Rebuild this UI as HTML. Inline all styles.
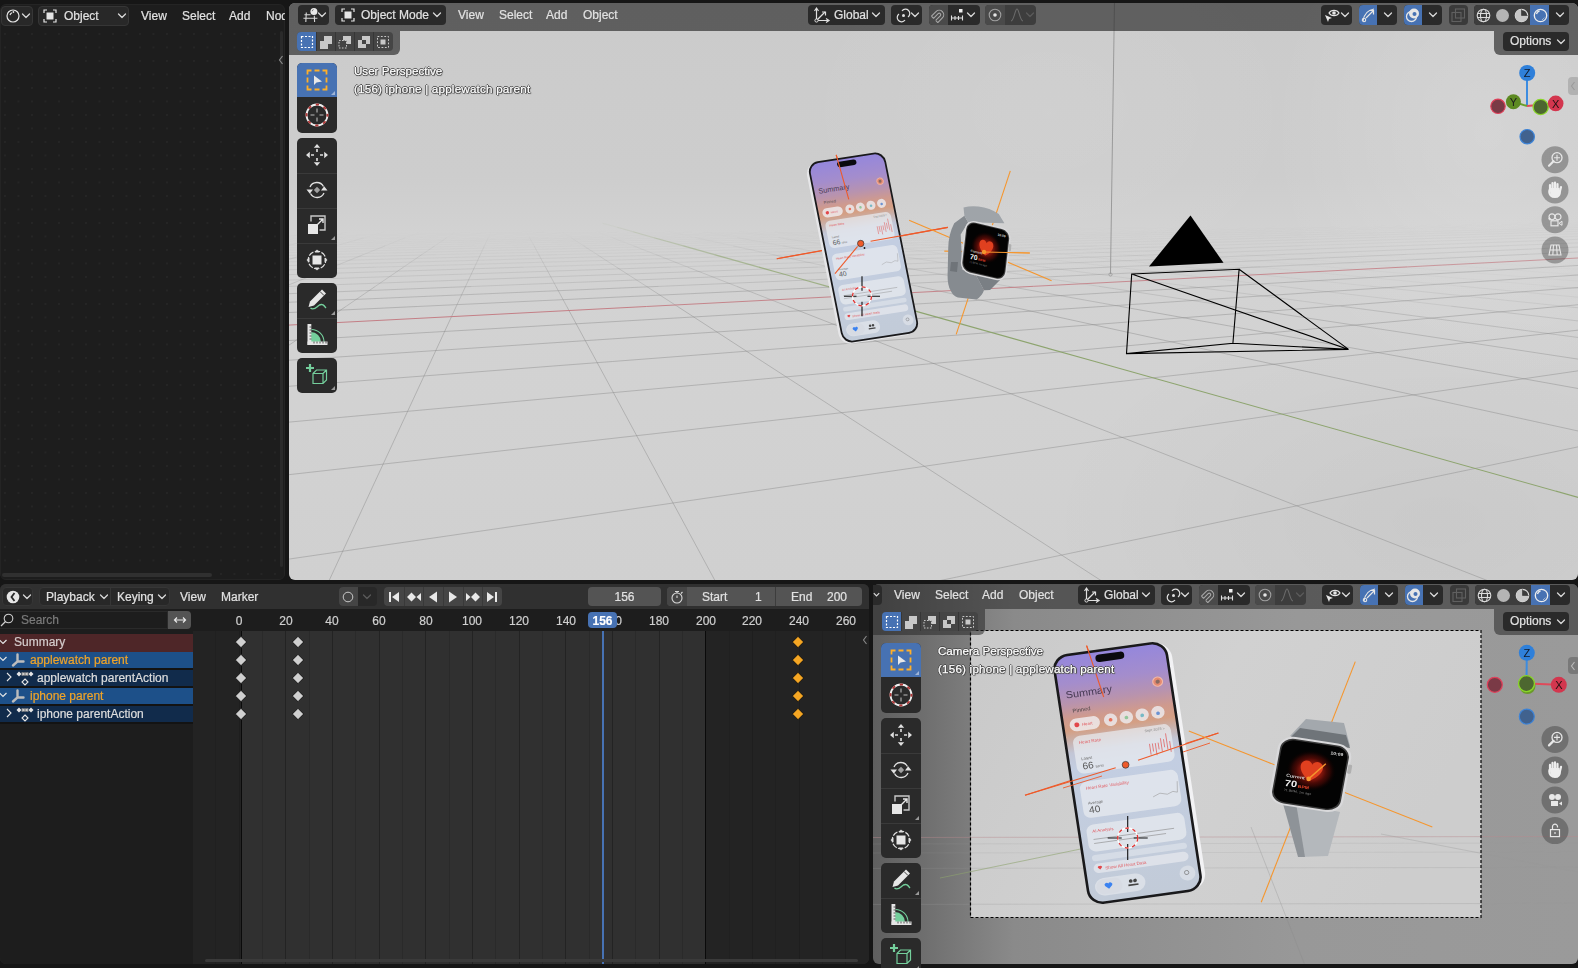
<!DOCTYPE html><html><head><meta charset="utf-8"><style>
*{box-sizing:border-box;margin:0;padding:0}
html,body{width:1578px;height:968px;overflow:hidden;background:#161616;font-family:"Liberation Sans",sans-serif;font-size:12px;color:#e2e2e2}
.a{position:absolute}
.t{position:absolute;white-space:nowrap;line-height:14px;will-change:transform;-webkit-text-stroke:0.2px currentColor}
.ov{color:#fff;-webkit-text-stroke:0.25px #fff;text-shadow:1px 0 0 #4a4a4a,-1px 0 0 #4a4a4a,0 1px 0 #4a4a4a,0 -1px 0 #4a4a4a,1px 1px 1px #555}
.btn{position:absolute;background:#2a2a2a;border-radius:4px}
svg.a{overflow:visible}
</style></head><body>
<div class="a" style="left:0;top:4px;width:285px;height:576px;background:#1d1d1d;border-radius:6px;overflow:hidden;border:1px solid #242424"><div class="a" style="left:3px;top:28px;width:290px;height:560px;background-image:radial-gradient(circle at 1px 1px,#252525 0.8px,transparent 1px);background-size:13.5px 13.5px;background-position:0 0"></div></div>
<div class="a" style="left:1px;top:6px;width:32px;height:20px;background:#282828;border-radius:4px;border:1px solid #363636"></div>
<svg class="a" style="left:6.0px;top:9.0px" width="14" height="14" viewBox="0 0 14 14" ><circle cx="7" cy="7" r="6" fill="none" stroke="#e6e6e6" stroke-width="1.2"/><path d="M4 6 A3.5 3.5 0 0 1 6 3.8" stroke="#e6e6e6" stroke-width="1.2" fill="none"/><circle cx="7.4" cy="3" r="0.9" fill="#e6e6e6"/></svg>
<svg class="a" style="left:21.0px;top:12.0px" width="10" height="8" viewBox="0 0 10 8" ><path d="M1.5 2 L5 5.5 L8.5 2" fill="none" stroke="#d8d8d8" stroke-width="1.3" stroke-linecap="round" stroke-linejoin="round"/></svg>
<div class="a" style="left:38px;top:6px;width:91px;height:20px;background:#282828;border-radius:4px;border:1px solid #363636"></div>
<svg class="a" style="left:43.0px;top:9.0px" width="14" height="14" viewBox="0 0 14 14" ><path d="M1 4V1h3M10 1h3v3M13 10v3h-3M4 13H1v-3" fill="none" stroke="#e6e6e6" stroke-width="1.2"/><rect x="3.5" y="3.5" width="7" height="7" fill="#e6e6e6"/></svg>
<div class="t" style="left:64px;top:9px;">Object</div>
<svg class="a" style="left:117.0px;top:12.0px" width="10" height="8" viewBox="0 0 10 8" ><path d="M1.5 2 L5 5.5 L8.5 2" fill="none" stroke="#d8d8d8" stroke-width="1.3" stroke-linecap="round" stroke-linejoin="round"/></svg>
<div class="t" style="left:141px;top:9px;">View</div>
<div class="t" style="left:182px;top:9px;">Select</div>
<div class="t" style="left:229px;top:9px;">Add</div>
<div class="t" style="left:266px;top:9px;">Node</div>
<div class="a" style="left:2px;top:573px;width:210px;height:4px;background:#303030;border-radius:2px;"></div>
<div class="a" style="left:280px;top:31px;width:3px;height:536px;background:#2a2a2a;border-radius:2px;"></div>
<svg class="a" style="left:278.0px;top:55.0px" width="6" height="10" viewBox="0 0 6 10" ><path d="M4.5 1 L1.5 5 L4.5 9" fill="none" stroke="#8a8a8a" stroke-width="1.2"/></svg>
<div class="a" style="left:285px;top:0px;width:4px;height:580px;background:#161616;border-radius:0px;"></div>
<div id="vp" class="a" style="left:289px;top:3px;width:1289px;height:577px;border-radius:6px;overflow:hidden;background:linear-gradient(180deg,#cbcbcb 0%,#cdcdcd 30%,#d3d3d3 42%,#d2d2d2 70%,#d0d0d0 100%)">
<div class="a" style="left:0;top:0;width:1289px;height:577px;background:radial-gradient(ellipse 220px 260px at 1200px 130px,rgba(255,255,255,0.16),rgba(255,255,255,0) 100%),radial-gradient(ellipse 260px 200px at 760px 110px,rgba(255,255,255,0.07),rgba(255,255,255,0) 100%),radial-gradient(ellipse 400px 220px at 1150px 520px,rgba(0,0,0,0.035),rgba(0,0,0,0) 100%)"></div>
<svg class="a" style="left:-289px;top:-3px" width="1578" height="968"><g stroke="#8a8a8a" stroke-width="1"><line x1="1252.8" y1="2673.0" x2="2573.9" y2="526.0" stroke-opacity="0.45"/><line x1="-3904.8" y1="2674.8" x2="1886.2" y2="526.2" stroke-opacity="0.45"/><line x1="-9062.5" y1="2676.6" x2="1198.5" y2="526.4" stroke-opacity="0.45"/><line x1="1198.5" y1="526.4" x2="1987.8" y2="361.0" stroke-opacity="0.45"/><line x1="-14220.2" y1="2678.4" x2="510.8" y2="526.7" stroke-opacity="0.45"/><line x1="510.8" y1="526.7" x2="1644.0" y2="361.2" stroke-opacity="0.45"/><line x1="-176.9" y1="526.9" x2="1300.1" y2="361.3" stroke-opacity="0.45"/><line x1="1300.1" y1="361.3" x2="1792.5" y2="306.1" stroke-opacity="0.45"/><line x1="-864.6" y1="527.1" x2="956.3" y2="361.4" stroke-opacity="0.45"/><line x1="956.3" y1="361.4" x2="1563.2" y2="306.1" stroke-opacity="0.45"/><line x1="1563.2" y1="306.1" x2="1783.9" y2="286.0" stroke-opacity="0.42"/><line x1="-1552.3" y1="527.4" x2="612.4" y2="361.5" stroke-opacity="0.45"/><line x1="612.4" y1="361.5" x2="1334.0" y2="306.2" stroke-opacity="0.45"/><line x1="1334.0" y1="306.2" x2="1596.4" y2="286.1" stroke-opacity="0.42"/><line x1="268.6" y1="361.6" x2="1104.8" y2="306.3" stroke-opacity="0.45"/><line x1="1104.8" y1="306.3" x2="1408.8" y2="286.2" stroke-opacity="0.42"/><line x1="1408.8" y1="286.2" x2="1702.0" y2="266.8" stroke-opacity="0.38"/><line x1="-75.3" y1="361.7" x2="875.5" y2="306.4" stroke-opacity="0.45"/><line x1="875.5" y1="306.4" x2="1221.3" y2="286.2" stroke-opacity="0.42"/><line x1="1221.3" y1="286.2" x2="1554.7" y2="266.8" stroke-opacity="0.38"/><line x1="1554.7" y1="266.8" x2="1770.4" y2="254.3" stroke-opacity="0.33"/><line x1="-762.9" y1="362.0" x2="417.1" y2="306.5" stroke-opacity="0.45"/><line x1="417.1" y1="306.5" x2="846.2" y2="286.4" stroke-opacity="0.42"/><line x1="846.2" y1="286.4" x2="1260.0" y2="266.9" stroke-opacity="0.32"/><line x1="1260.0" y1="266.9" x2="1527.7" y2="254.3" stroke-opacity="0.24"/><line x1="1527.7" y1="254.3" x2="1715.1" y2="245.5" stroke-opacity="0.19"/><line x1="187.9" y1="306.6" x2="658.6" y2="286.4" stroke-opacity="0.38"/><line x1="658.6" y1="286.4" x2="1112.6" y2="267.0" stroke-opacity="0.28"/><line x1="1112.6" y1="267.0" x2="1406.3" y2="254.4" stroke-opacity="0.21"/><line x1="1406.3" y1="254.4" x2="1612.0" y2="245.6" stroke-opacity="0.16"/><line x1="-41.4" y1="306.7" x2="471.1" y2="286.5" stroke-opacity="0.34"/><line x1="471.1" y1="286.5" x2="965.2" y2="267.0" stroke-opacity="0.25"/><line x1="965.2" y1="267.0" x2="1285.0" y2="254.4" stroke-opacity="0.18"/><line x1="1285.0" y1="254.4" x2="1508.8" y2="245.6" stroke-opacity="0.14"/><line x1="1508.8" y1="245.6" x2="1720.2" y2="237.3" stroke-opacity="0.11"/><line x1="-270.6" y1="306.8" x2="283.5" y2="286.6" stroke-opacity="0.30"/><line x1="283.5" y1="286.6" x2="817.9" y2="267.1" stroke-opacity="0.22"/><line x1="817.9" y1="267.1" x2="1163.6" y2="254.5" stroke-opacity="0.16"/><line x1="1163.6" y1="254.5" x2="1405.6" y2="245.6" stroke-opacity="0.12"/><line x1="1405.6" y1="245.6" x2="1634.2" y2="237.3" stroke-opacity="0.09"/><line x1="96.0" y1="286.6" x2="670.5" y2="267.1" stroke-opacity="0.20"/><line x1="670.5" y1="267.1" x2="1042.3" y2="254.5" stroke-opacity="0.14"/><line x1="1042.3" y1="254.5" x2="1302.5" y2="245.7" stroke-opacity="0.11"/><line x1="1302.5" y1="245.7" x2="1548.3" y2="237.3" stroke-opacity="0.08"/><line x1="1548.3" y1="237.3" x2="1723.8" y2="231.4" stroke-opacity="0.06"/><line x1="-91.6" y1="286.7" x2="523.1" y2="267.2" stroke-opacity="0.18"/><line x1="523.1" y1="267.2" x2="920.9" y2="254.6" stroke-opacity="0.13"/><line x1="920.9" y1="254.6" x2="1199.3" y2="245.7" stroke-opacity="0.10"/><line x1="1199.3" y1="245.7" x2="1462.3" y2="237.4" stroke-opacity="0.07"/><line x1="1462.3" y1="237.4" x2="1650.1" y2="231.4" stroke-opacity="0.05"/><line x1="-279.1" y1="286.8" x2="375.8" y2="267.2" stroke-opacity="0.16"/><line x1="375.8" y1="267.2" x2="799.6" y2="254.6" stroke-opacity="0.12"/><line x1="799.6" y1="254.6" x2="1096.2" y2="245.8" stroke-opacity="0.09"/><line x1="1096.2" y1="245.8" x2="1376.3" y2="237.4" stroke-opacity="0.07"/><line x1="1376.3" y1="237.4" x2="1576.5" y2="231.4" stroke-opacity="0.05"/><line x1="1576.5" y1="231.4" x2="1726.5" y2="227.0" stroke-opacity="0.04"/><line x1="228.4" y1="267.3" x2="678.2" y2="254.6" stroke-opacity="0.11"/><line x1="678.2" y1="254.6" x2="993.0" y2="245.8" stroke-opacity="0.08"/><line x1="993.0" y1="245.8" x2="1290.4" y2="237.4" stroke-opacity="0.06"/><line x1="1290.4" y1="237.4" x2="1502.8" y2="231.5" stroke-opacity="0.04"/><line x1="1502.8" y1="231.5" x2="1662.1" y2="227.0" stroke-opacity="0.03"/><line x1="81.1" y1="267.3" x2="556.8" y2="254.7" stroke-opacity="0.10"/><line x1="556.8" y1="254.7" x2="889.9" y2="245.8" stroke-opacity="0.07"/><line x1="889.9" y1="245.8" x2="1204.4" y2="237.5" stroke-opacity="0.05"/><line x1="1204.4" y1="237.5" x2="1429.1" y2="231.5" stroke-opacity="0.04"/><line x1="1429.1" y1="231.5" x2="1597.6" y2="227.0" stroke-opacity="0.03"/><line x1="-66.3" y1="267.4" x2="435.5" y2="254.7" stroke-opacity="0.09"/><line x1="435.5" y1="254.7" x2="786.7" y2="245.9" stroke-opacity="0.06"/><line x1="786.7" y1="245.9" x2="1118.5" y2="237.5" stroke-opacity="0.05"/><line x1="1118.5" y1="237.5" x2="1355.4" y2="231.5" stroke-opacity="0.03"/><line x1="1355.4" y1="231.5" x2="1533.1" y2="227.0" stroke-opacity="0.02"/><line x1="1533.1" y1="227.0" x2="1701.2" y2="222.8" stroke-opacity="0.02"/><line x1="-213.7" y1="267.4" x2="314.1" y2="254.8" stroke-opacity="0.08"/><line x1="314.1" y1="254.8" x2="683.6" y2="245.9" stroke-opacity="0.06"/><line x1="683.6" y1="245.9" x2="1032.5" y2="237.5" stroke-opacity="0.04"/><line x1="1032.5" y1="237.5" x2="1281.7" y2="231.5" stroke-opacity="0.03"/><line x1="1281.7" y1="231.5" x2="1468.7" y2="227.0" stroke-opacity="0.02"/><line x1="1468.7" y1="227.0" x2="1645.5" y2="222.8" stroke-opacity="0.01"/><line x1="192.8" y1="254.8" x2="580.4" y2="245.9" stroke-opacity="0.05"/><line x1="580.4" y1="245.9" x2="946.5" y2="237.5" stroke-opacity="0.04"/><line x1="946.5" y1="237.5" x2="1208.1" y2="231.6" stroke-opacity="0.03"/><line x1="1208.1" y1="231.6" x2="1404.2" y2="227.1" stroke-opacity="0.02"/><line x1="1404.2" y1="227.1" x2="1589.7" y2="222.8" stroke-opacity="0.01"/><line x1="71.4" y1="254.9" x2="477.3" y2="246.0" stroke-opacity="0.05"/><line x1="477.3" y1="246.0" x2="860.6" y2="237.6" stroke-opacity="0.03"/><line x1="860.6" y1="237.6" x2="1134.4" y2="231.6" stroke-opacity="0.02"/><line x1="1134.4" y1="231.6" x2="1339.7" y2="227.1" stroke-opacity="0.02"/><line x1="1339.7" y1="227.1" x2="1534.0" y2="222.8" stroke-opacity="0.01"/><line x1="-50.0" y1="254.9" x2="374.1" y2="246.0" stroke-opacity="0.04"/><line x1="374.1" y1="246.0" x2="774.6" y2="237.6" stroke-opacity="0.03"/><line x1="774.6" y1="237.6" x2="1060.7" y2="231.6" stroke-opacity="0.02"/><line x1="1060.7" y1="231.6" x2="1275.2" y2="227.1" stroke-opacity="0.01"/><line x1="271.0" y1="246.0" x2="688.7" y2="237.6" stroke-opacity="0.03"/><line x1="688.7" y1="237.6" x2="987.0" y2="231.6" stroke-opacity="0.02"/><line x1="987.0" y1="231.6" x2="1210.8" y2="227.1" stroke-opacity="0.01"/><line x1="167.8" y1="246.1" x2="602.7" y2="237.7" stroke-opacity="0.03"/><line x1="602.7" y1="237.7" x2="913.3" y2="231.7" stroke-opacity="0.02"/><line x1="913.3" y1="231.7" x2="1146.3" y2="227.2" stroke-opacity="0.01"/><line x1="64.7" y1="246.1" x2="516.7" y2="237.7" stroke-opacity="0.02"/><line x1="516.7" y1="237.7" x2="839.6" y2="231.7" stroke-opacity="0.02"/><line x1="839.6" y1="231.7" x2="1081.8" y2="227.2" stroke-opacity="0.01"/><line x1="-38.5" y1="246.1" x2="430.8" y2="237.7" stroke-opacity="0.02"/><line x1="430.8" y1="237.7" x2="766.0" y2="231.7" stroke-opacity="0.01"/><line x1="-141.7" y1="246.2" x2="344.8" y2="237.8" stroke-opacity="0.02"/><line x1="344.8" y1="237.8" x2="692.3" y2="231.7" stroke-opacity="0.01"/><line x1="258.8" y1="237.8" x2="618.6" y2="231.8" stroke-opacity="0.01"/><line x1="172.9" y1="237.8" x2="544.9" y2="231.8" stroke-opacity="0.01"/><line x1="235.5" y1="246.1" x2="280.8" y2="237.8" stroke-opacity="0.07"/><line x1="280.8" y1="237.8" x2="313.2" y2="231.9" stroke-opacity="0.02"/><line x1="246.1" y1="254.8" x2="285.3" y2="246.0" stroke-opacity="0.13"/><line x1="285.3" y1="246.0" x2="322.3" y2="237.8" stroke-opacity="0.07"/><line x1="322.3" y1="237.8" x2="348.7" y2="231.9" stroke-opacity="0.02"/><line x1="261.2" y1="267.3" x2="304.7" y2="254.8" stroke-opacity="0.20"/><line x1="304.7" y1="254.8" x2="335.1" y2="246.0" stroke-opacity="0.13"/><line x1="335.1" y1="246.0" x2="363.8" y2="237.8" stroke-opacity="0.07"/><line x1="363.8" y1="237.8" x2="384.3" y2="231.8" stroke-opacity="0.02"/><line x1="235.1" y1="306.6" x2="284.6" y2="286.6" stroke-opacity="0.37"/><line x1="284.6" y1="286.6" x2="332.3" y2="267.2" stroke-opacity="0.28"/><line x1="332.3" y1="267.2" x2="363.2" y2="254.7" stroke-opacity="0.20"/><line x1="363.2" y1="254.7" x2="384.8" y2="246.0" stroke-opacity="0.13"/><line x1="384.8" y1="246.0" x2="405.2" y2="237.7" stroke-opacity="0.07"/><line x1="405.2" y1="237.7" x2="419.8" y2="231.8" stroke-opacity="0.02"/><line x1="264.8" y1="361.6" x2="345.7" y2="306.6" stroke-opacity="0.45"/><line x1="345.7" y1="306.6" x2="375.1" y2="286.5" stroke-opacity="0.37"/><line x1="375.1" y1="286.5" x2="403.4" y2="267.2" stroke-opacity="0.28"/><line x1="403.4" y1="267.2" x2="421.7" y2="254.7" stroke-opacity="0.20"/><line x1="421.7" y1="254.7" x2="434.6" y2="246.0" stroke-opacity="0.13"/><line x1="434.6" y1="246.0" x2="446.7" y2="237.7" stroke-opacity="0.07"/><line x1="446.7" y1="237.7" x2="455.4" y2="231.8" stroke-opacity="0.02"/><line x1="-641.8" y1="2673.7" x2="354.1" y2="526.7" stroke-opacity="0.45"/><line x1="354.1" y1="526.7" x2="430.7" y2="361.6" stroke-opacity="0.45"/><line x1="430.7" y1="361.6" x2="456.2" y2="306.5" stroke-opacity="0.45"/><line x1="456.2" y1="306.5" x2="465.5" y2="286.5" stroke-opacity="0.37"/><line x1="465.5" y1="286.5" x2="474.5" y2="267.2" stroke-opacity="0.28"/><line x1="474.5" y1="267.2" x2="480.3" y2="254.7" stroke-opacity="0.20"/><line x1="480.3" y1="254.7" x2="484.3" y2="246.0" stroke-opacity="0.13"/><line x1="484.3" y1="246.0" x2="488.2" y2="237.7" stroke-opacity="0.07"/><line x1="488.2" y1="237.7" x2="490.9" y2="231.8" stroke-opacity="0.02"/><line x1="1846.0" y1="2672.8" x2="685.8" y2="526.6" stroke-opacity="0.45"/><line x1="685.8" y1="526.6" x2="596.6" y2="361.5" stroke-opacity="0.45"/><line x1="596.6" y1="361.5" x2="566.8" y2="306.5" stroke-opacity="0.45"/><line x1="566.8" y1="306.5" x2="556.0" y2="286.5" stroke-opacity="0.37"/><line x1="556.0" y1="286.5" x2="545.6" y2="267.2" stroke-opacity="0.28"/><line x1="545.6" y1="267.2" x2="538.8" y2="254.7" stroke-opacity="0.20"/><line x1="538.8" y1="254.7" x2="534.1" y2="245.9" stroke-opacity="0.13"/><line x1="534.1" y1="245.9" x2="529.6" y2="237.7" stroke-opacity="0.07"/><line x1="529.6" y1="237.7" x2="526.4" y2="231.8" stroke-opacity="0.02"/><line x1="4333.8" y1="2672.0" x2="1017.5" y2="526.5" stroke-opacity="0.45"/><line x1="1017.5" y1="526.5" x2="762.4" y2="361.5" stroke-opacity="0.45"/><line x1="762.4" y1="361.5" x2="677.4" y2="306.4" stroke-opacity="0.45"/><line x1="677.4" y1="306.4" x2="646.5" y2="286.4" stroke-opacity="0.37"/><line x1="646.5" y1="286.4" x2="616.6" y2="267.2" stroke-opacity="0.28"/><line x1="616.6" y1="267.2" x2="597.3" y2="254.7" stroke-opacity="0.20"/><line x1="597.3" y1="254.7" x2="583.8" y2="245.9" stroke-opacity="0.13"/><line x1="583.8" y1="245.9" x2="571.1" y2="237.7" stroke-opacity="0.07"/><line x1="571.1" y1="237.7" x2="562.0" y2="231.8" stroke-opacity="0.02"/><line x1="6821.6" y1="2671.1" x2="1349.2" y2="526.4" stroke-opacity="0.45"/><line x1="1349.2" y1="526.4" x2="928.3" y2="361.4" stroke-opacity="0.45"/><line x1="928.3" y1="361.4" x2="787.9" y2="306.4" stroke-opacity="0.45"/><line x1="787.9" y1="306.4" x2="736.9" y2="286.4" stroke-opacity="0.37"/><line x1="736.9" y1="286.4" x2="687.7" y2="267.1" stroke-opacity="0.28"/><line x1="687.7" y1="267.1" x2="655.9" y2="254.6" stroke-opacity="0.20"/><line x1="655.9" y1="254.6" x2="633.6" y2="245.9" stroke-opacity="0.13"/><line x1="633.6" y1="245.9" x2="612.5" y2="237.7" stroke-opacity="0.07"/><line x1="612.5" y1="237.7" x2="597.5" y2="231.8" stroke-opacity="0.02"/><line x1="2012.6" y1="526.2" x2="1260.0" y2="361.3" stroke-opacity="0.45"/><line x1="1260.0" y1="361.3" x2="1009.1" y2="306.3" stroke-opacity="0.45"/><line x1="1009.1" y1="306.3" x2="917.9" y2="286.3" stroke-opacity="0.37"/><line x1="917.9" y1="286.3" x2="829.9" y2="267.1" stroke-opacity="0.28"/><line x1="829.9" y1="267.1" x2="773.0" y2="254.6" stroke-opacity="0.20"/><line x1="773.0" y1="254.6" x2="733.1" y2="245.9" stroke-opacity="0.13"/><line x1="733.1" y1="245.9" x2="695.5" y2="237.6" stroke-opacity="0.07"/><line x1="695.5" y1="237.6" x2="668.6" y2="231.7" stroke-opacity="0.02"/><line x1="2344.3" y1="526.0" x2="1425.8" y2="361.2" stroke-opacity="0.45"/><line x1="1425.8" y1="361.2" x2="1119.7" y2="306.3" stroke-opacity="0.45"/><line x1="1119.7" y1="306.3" x2="1008.3" y2="286.3" stroke-opacity="0.35"/><line x1="1008.3" y1="286.3" x2="901.0" y2="267.1" stroke-opacity="0.24"/><line x1="901.0" y1="267.1" x2="831.5" y2="254.6" stroke-opacity="0.17"/><line x1="831.5" y1="254.6" x2="782.9" y2="245.9" stroke-opacity="0.12"/><line x1="782.9" y1="245.9" x2="736.9" y2="237.6" stroke-opacity="0.07"/><line x1="736.9" y1="237.6" x2="704.1" y2="231.7" stroke-opacity="0.02"/><line x1="1591.7" y1="361.2" x2="1230.2" y2="306.3" stroke-opacity="0.41"/><line x1="1230.2" y1="306.3" x2="1098.8" y2="286.3" stroke-opacity="0.27"/><line x1="1098.8" y1="286.3" x2="972.0" y2="267.0" stroke-opacity="0.18"/><line x1="972.0" y1="267.0" x2="890.0" y2="254.6" stroke-opacity="0.13"/><line x1="890.0" y1="254.6" x2="832.6" y2="245.8" stroke-opacity="0.09"/><line x1="832.6" y1="245.8" x2="778.4" y2="237.6" stroke-opacity="0.06"/><line x1="778.4" y1="237.6" x2="739.7" y2="231.7" stroke-opacity="0.02"/><line x1="1757.5" y1="361.1" x2="1340.8" y2="306.2" stroke-opacity="0.33"/><line x1="1340.8" y1="306.2" x2="1189.3" y2="286.3" stroke-opacity="0.21"/><line x1="1189.3" y1="286.3" x2="1043.1" y2="267.0" stroke-opacity="0.14"/><line x1="1043.1" y1="267.0" x2="948.6" y2="254.5" stroke-opacity="0.10"/><line x1="948.6" y1="254.5" x2="882.4" y2="245.8" stroke-opacity="0.07"/><line x1="882.4" y1="245.8" x2="819.9" y2="237.6" stroke-opacity="0.04"/><line x1="819.9" y1="237.6" x2="775.2" y2="231.7" stroke-opacity="0.02"/><line x1="1923.4" y1="361.1" x2="1451.4" y2="306.2" stroke-opacity="0.27"/><line x1="1451.4" y1="306.2" x2="1279.7" y2="286.2" stroke-opacity="0.17"/><line x1="1279.7" y1="286.2" x2="1114.2" y2="267.0" stroke-opacity="0.11"/><line x1="1114.2" y1="267.0" x2="1007.1" y2="254.5" stroke-opacity="0.07"/><line x1="1007.1" y1="254.5" x2="932.1" y2="245.8" stroke-opacity="0.05"/><line x1="932.1" y1="245.8" x2="861.3" y2="237.6" stroke-opacity="0.03"/><line x1="861.3" y1="237.6" x2="810.8" y2="231.7" stroke-opacity="0.02"/><line x1="2089.2" y1="361.0" x2="1561.9" y2="306.1" stroke-opacity="0.23"/><line x1="1561.9" y1="306.1" x2="1370.2" y2="286.2" stroke-opacity="0.14"/><line x1="1370.2" y1="286.2" x2="1185.3" y2="267.0" stroke-opacity="0.09"/><line x1="1185.3" y1="267.0" x2="1065.6" y2="254.5" stroke-opacity="0.06"/><line x1="1065.6" y1="254.5" x2="981.9" y2="245.8" stroke-opacity="0.04"/><line x1="981.9" y1="245.8" x2="902.8" y2="237.6" stroke-opacity="0.02"/><line x1="902.8" y1="237.6" x2="846.3" y2="231.7" stroke-opacity="0.01"/><line x1="1672.5" y1="306.1" x2="1460.6" y2="286.2" stroke-opacity="0.12"/><line x1="1460.6" y1="286.2" x2="1256.4" y2="266.9" stroke-opacity="0.07"/><line x1="1256.4" y1="266.9" x2="1124.2" y2="254.5" stroke-opacity="0.04"/><line x1="1124.2" y1="254.5" x2="1031.6" y2="245.8" stroke-opacity="0.03"/><line x1="1031.6" y1="245.8" x2="944.3" y2="237.6" stroke-opacity="0.01"/><line x1="1783.1" y1="306.1" x2="1551.1" y2="286.1" stroke-opacity="0.10"/><line x1="1551.1" y1="286.1" x2="1327.4" y2="266.9" stroke-opacity="0.06"/><line x1="1327.4" y1="266.9" x2="1182.7" y2="254.5" stroke-opacity="0.03"/><line x1="1182.7" y1="254.5" x2="1081.4" y2="245.8" stroke-opacity="0.02"/><line x1="1641.6" y1="286.1" x2="1398.5" y2="266.9" stroke-opacity="0.05"/><line x1="1398.5" y1="266.9" x2="1241.2" y2="254.4" stroke-opacity="0.03"/><line x1="1241.2" y1="254.4" x2="1131.2" y2="245.7" stroke-opacity="0.01"/><line x1="1732.0" y1="286.1" x2="1469.6" y2="266.9" stroke-opacity="0.04"/><line x1="1469.6" y1="266.9" x2="1299.8" y2="254.4" stroke-opacity="0.02"/><line x1="1299.8" y1="254.4" x2="1180.9" y2="245.7" stroke-opacity="0.01"/><line x1="1822.5" y1="286.0" x2="1540.7" y2="266.8" stroke-opacity="0.03"/><line x1="1540.7" y1="266.8" x2="1358.3" y2="254.4" stroke-opacity="0.02"/><line x1="1611.8" y1="266.8" x2="1416.9" y2="254.4" stroke-opacity="0.01"/></g><line x1="-45166.3" y1="2689.1" x2="-3615.3" y2="528.1" stroke="#c47f86" stroke-opacity="1.00" stroke-width="1"/><line x1="-3615.3" y1="528.1" x2="-419.1" y2="361.9" stroke="#c47f86" stroke-opacity="1.00" stroke-width="1"/><line x1="-419.1" y1="361.9" x2="646.3" y2="306.5" stroke="#c47f86" stroke-opacity="1.00" stroke-width="1"/><line x1="646.3" y1="306.5" x2="1033.7" y2="286.3" stroke="#c47f86" stroke-opacity="0.94" stroke-width="1"/><line x1="1033.7" y1="286.3" x2="1407.3" y2="266.9" stroke="#c47f86" stroke-opacity="0.87" stroke-width="1"/><line x1="1407.3" y1="266.9" x2="1649.1" y2="254.3" stroke="#c47f86" stroke-opacity="0.73" stroke-width="1"/><line x1="1649.1" y1="254.3" x2="1818.3" y2="245.5" stroke="#c47f86" stroke-opacity="0.56" stroke-width="1"/><line x1="1818.3" y1="245.5" x2="1978.1" y2="237.2" stroke="#c47f86" stroke-opacity="0.43" stroke-width="1"/><line x1="1978.1" y1="237.2" x2="2092.2" y2="231.3" stroke="#c47f86" stroke-opacity="0.33" stroke-width="1"/><line x1="2092.2" y1="231.3" x2="2177.8" y2="226.8" stroke="#c47f86" stroke-opacity="0.25" stroke-width="1"/><line x1="2177.8" y1="226.8" x2="2258.8" y2="222.6" stroke="#c47f86" stroke-opacity="0.20" stroke-width="1"/><line x1="2258.8" y1="222.6" x2="2320.5" y2="219.4" stroke="#c47f86" stroke-opacity="0.15" stroke-width="1"/><line x1="2320.5" y1="219.4" x2="2377.6" y2="216.4" stroke="#c47f86" stroke-opacity="0.11" stroke-width="1"/><line x1="2377.6" y1="216.4" x2="2428.5" y2="213.8" stroke="#c47f86" stroke-opacity="0.08" stroke-width="1"/><line x1="2428.5" y1="213.8" x2="2482.1" y2="211.0" stroke="#c47f86" stroke-opacity="0.05" stroke-width="1"/><line x1="9309.5" y1="2670.3" x2="1680.9" y2="526.3" stroke="#8da46e" stroke-opacity="1.00" stroke-width="1.1"/><line x1="1680.9" y1="526.3" x2="1094.1" y2="361.3" stroke="#8da46e" stroke-opacity="1.00" stroke-width="1.1"/><line x1="1094.1" y1="361.3" x2="898.5" y2="306.4" stroke="#8da46e" stroke-opacity="1.00" stroke-width="1.1"/><line x1="898.5" y1="306.4" x2="827.4" y2="286.4" stroke="#8da46e" stroke-opacity="0.88" stroke-width="1.1"/><line x1="827.4" y1="286.4" x2="758.8" y2="267.1" stroke="#8da46e" stroke-opacity="0.75" stroke-width="1.1"/><line x1="758.8" y1="267.1" x2="714.4" y2="254.6" stroke="#8da46e" stroke-opacity="0.61" stroke-width="1.1"/><line x1="714.4" y1="254.6" x2="683.4" y2="245.9" stroke="#8da46e" stroke-opacity="0.48" stroke-width="1.1"/><line x1="683.4" y1="245.9" x2="654.0" y2="237.7" stroke="#8da46e" stroke-opacity="0.35" stroke-width="1.1"/><line x1="654.0" y1="237.7" x2="633.1" y2="231.8" stroke="#8da46e" stroke-opacity="0.23" stroke-width="1.1"/><line x1="633.1" y1="231.8" x2="617.3" y2="227.3" stroke="#8da46e" stroke-opacity="0.14" stroke-width="1.1"/><line x1="617.3" y1="227.3" x2="602.5" y2="223.2" stroke="#8da46e" stroke-opacity="0.06" stroke-width="1.1"/><line x1="776.8" y1="258.7" x2="947.8" y2="227.4" stroke="#ee5a2a" stroke-width="1.1" stroke-opacity="1.0"/><line x1="836.2" y1="154.9" x2="850" y2="203" stroke="#ee5a2a" stroke-width="1.1" stroke-opacity="1.0"/><line x1="835" y1="273.7" x2="857.6" y2="246.4" stroke="#ee5a2a" stroke-width="1.1" stroke-opacity="1.0"/><defs><linearGradient id="pg1" x1="0" y1="0" x2="0" y2="1"><stop offset="0" stop-color="#9587dc"/><stop offset="0.11" stop-color="#a48dcc"/><stop offset="0.19" stop-color="#b893ae"/><stop offset="0.25" stop-color="#cf9a8e"/><stop offset="0.30" stop-color="#d49f84"/><stop offset="0.34" stop-color="#c8b0aa"/><stop offset="0.39" stop-color="#c2c6d6"/><stop offset="0.46" stop-color="#c3cee2"/><stop offset="1" stop-color="#c2cbd8"/></linearGradient></defs><g transform="matrix(0.9625,-0.1500,0.1935,0.9731,807.00,163.00)"><rect x="-2.5" y="1" width="80" height="186" rx="12" fill="#e6e6e8"/><rect x="0" y="0" width="80" height="186" rx="11" fill="#19191b"/><rect x="1.8" y="1.8" width="76.4" height="182.4" rx="9.5" fill="url(#pg1)"/><rect x="30.0" y="3.8" width="20" height="5.5" rx="2.75" fill="#0a0a0e"/><text x="6" y="32.5" font-size="7.5" font-family="Liberation Sans" fill="#3b3048" fill-opacity="0.9">Summary</text><circle cx="70" cy="29.5" r="3.4" fill="#e58a70" stroke="#f0b9a8" stroke-width="0.8"/><circle cx="70" cy="29.5" r="1.5" fill="#8a6a60"/><text x="9" y="43.5" font-size="4" font-family="Liberation Sans" fill="#333" fill-opacity="0.8">Pinned</text><rect x="5.5" y="48" width="21" height="9.5" rx="4.75" fill="#efeaec" fill-opacity="0.85"/><circle cx="10.5" cy="52.8" r="1.7" fill="#e2474b"/><text x="14" y="54" font-size="3" font-family="Liberation Sans" fill="#e25a60">Heart</text><circle cx="34" cy="52.5" r="4.6" fill="#eeedf1" fill-opacity="0.8"/><circle cx="34" cy="52.5" r="1.3" fill="#e8553a" fill-opacity="0.8"/><circle cx="45" cy="52.28" r="4.6" fill="#eeedf1" fill-opacity="0.8"/><circle cx="45" cy="52.5" r="1.3" fill="#7cc08a" fill-opacity="0.8"/><circle cx="56" cy="52.06" r="4.6" fill="#eeedf1" fill-opacity="0.8"/><circle cx="56" cy="52.5" r="1.3" fill="#5ab0c0" fill-opacity="0.8"/><circle cx="67" cy="51.84" r="4.6" fill="#eeedf1" fill-opacity="0.8"/><circle cx="67" cy="52.5" r="1.3" fill="#4a80d0" fill-opacity="0.8"/><rect x="6" y="61" width="68" height="28" rx="5" fill="#e9ebf0" fill-opacity="0.72"/><rect x="6" y="95" width="68" height="27" rx="5" fill="#e9ebf0" fill-opacity="0.72"/><rect x="6" y="127" width="68" height="20" rx="5" fill="#e9ebf0" fill-opacity="0.72"/><rect x="7" y="149.5" width="66" height="4.5" rx="2.2" fill="#e6e9ee" fill-opacity="0.55"/><rect x="7" y="156" width="66" height="7" rx="3.5" fill="#e8eaef" fill-opacity="0.7"/><text x="10" y="67" font-size="3.2" font-family="Liberation Sans" fill="#e25a60">Heart Rate</text><text x="56" y="65" font-size="2.6" font-family="Liberation Sans" fill="#888">Sept 2025 &gt;</text><text x="10" y="79" font-size="2.8" font-family="Liberation Sans" fill="#666">Latest</text><text x="10" y="86" font-size="7" font-family="Liberation Sans" fill="#555">66</text><text x="19" y="86" font-size="2.6" font-family="Liberation Sans" fill="#777">BPM</text><text x="10" y="101" font-size="3.2" font-family="Liberation Sans" fill="#e25a60">Heart Rate Variability</text><text x="10" y="112" font-size="2.8" font-family="Liberation Sans" fill="#666">Average</text><text x="10" y="118.5" font-size="7" font-family="Liberation Sans" fill="#555">40</text><path d="M58 82 v-8 M60 80 v-6 M62 83 v-9 M64 79 v-5 M66 81 v-10 M68 78 v-6 M70 80 v-12 M72 82 v-8" stroke="#e07070" stroke-width="0.6"/><path d="M55 113 l5 -2 l5 1.5 l4 -1.5 l3 1 l1 -8" fill="none" stroke="#999" stroke-width="0.4"/><text x="10" y="133" font-size="3" font-family="Liberation Sans" fill="#e25a60">AI Analysis</text><path d="M10 138h56M10 141h50" stroke="#8a8a8a" stroke-width="0.6" stroke-opacity="0.7"/><path d="M11.5 160.5 l1.5 -1.5 a1 1 0 0 0 -1.5 -1 a1 1 0 0 0 -1.5 1Z" fill="#e2474b"/><text x="15" y="161" font-size="3.2" font-family="Liberation Sans" fill="#e25a60">Show All Heart Data</text><rect x="6" y="167" width="35" height="13" rx="6.5" fill="#e4e7ed" fill-opacity="0.7"/><rect x="7" y="168" width="18" height="11" rx="5.5" fill="#d6dae2" fill-opacity="0.8"/><path d="M15.5 175.5 l2.5 -2.5 a1.3 1.3 0 0 0 -2.5 -1.4 a1.3 1.3 0 0 0 -2.5 1.4Z" fill="#3b82f0"/><circle cx="31" cy="172" r="1.3" fill="#444"/><circle cx="34" cy="172" r="1.3" fill="#444"/><path d="M29 175h7" stroke="#444" stroke-width="1.2"/><circle cx="70.5" cy="172" r="5.5" fill="#e4e7ed" fill-opacity="0.6"/><circle cx="70" cy="171.5" r="1.5" fill="none" stroke="#777" stroke-width="0.5"/></g><line x1="836.2" y1="154.9" x2="848.8" y2="199.4" stroke="#ee5a2a" stroke-width="1.1" stroke-opacity="1.0"/><line x1="776.8" y1="258.7" x2="822" y2="250.7" stroke="#ee5a2a" stroke-width="1.1" stroke-opacity="1.0"/><line x1="870.6" y1="241.2" x2="947.8" y2="227.4" stroke="#ee5a2a" stroke-width="1.1" stroke-opacity="1.0"/><line x1="835" y1="273.7" x2="857.6" y2="246.4" stroke="#ee5a2a" stroke-width="1.1" stroke-opacity="1.0"/><circle cx="860.7" cy="243.5" r="3.2" fill="#ee5a2a" stroke="#333" stroke-width="0.7"/><circle cx="864.5" cy="248" r="0.9" fill="#111"/><line x1="1010.3" y1="170.9" x2="956.2" y2="334.3" stroke="#f5962e" stroke-width="1.1" stroke-opacity="1.0"/><line x1="909.1" y1="220.3" x2="1051.6" y2="280.8" stroke="#f5962e" stroke-width="1.1" stroke-opacity="1.0"/><line x1="944.3" y1="251.1" x2="1029.8" y2="253" stroke="#f5962e" stroke-width="1.1" stroke-opacity="1.0"/><defs><radialGradient id="wg2" cx="0.5" cy="0.5" r="0.5"><stop offset="0" stop-color="#c02814"/><stop offset="0.45" stop-color="#7a140c"/><stop offset="0.6" stop-color="#4a0a06"/><stop offset="0.75" stop-color="#2a0604"/><stop offset="1" stop-color="#000" stop-opacity="0"/></radialGradient></defs><path d="M964.4,215.8 L954.2,223.2 Q948,235 948.2,250 L947.7,271.6 Q947,285 950.5,290.2 Q953,296 957.9,297.6 L976.5,299.5 Q982,296 984,290.2 L976.5,276.2 L962.5,269.7 L960.7,234.4 L968.1,222.3 Z" fill="#868b90"/><path d="M963.5,207.4 Q971,205.5 978.4,206.5 Q990,208 998.8,213.9 L1004.4,223.2 L968.1,222.3 L964.4,215.8 Z" fill="#9fa4a9"/><path d="M962.5,269.7 L1004,276 L990,290 L984,290.2 L976.5,276.2 Z" fill="#7a7f84"/><path d="M951,262 L958,262 L957,272 L950,271 Z" fill="#6f7479"/><g transform="matrix(0.9762,0.2286,-0.1146,0.9937,968.00,222.00)"><rect x="-2.5" y="-2.5" width="47" height="53" rx="10" fill="#d9d9db"/><rect x="43.5" y="12" width="2.5" height="7" rx="1" fill="#b0b0b0"/><rect x="-1" y="-1" width="44" height="50" rx="8.5" fill="#3a3a3a"/><rect x="0" y="0" width="42" height="48" rx="8" fill="#030303"/><circle cx="21" cy="21" r="16" fill="url(#wg2)"/><path d="M21 29 C12.5 23 12.5 15.5 16.5 14 C18.5 13.3 20.3 14.5 21 16.5 C21.7 14.5 23.5 13.3 25.5 14 C29.5 15.5 29.5 23 21 29Z" fill="#e0401f"/><text x="6" y="35.5" font-size="7" font-weight="bold" font-family="Liberation Sans" fill="#f0f0f0">70</text><text x="14.5" y="35.5" font-size="3.2" font-weight="bold" font-family="Liberation Sans" fill="#e8442a">BPM</text><text x="6" y="28.5" font-size="3.3" font-weight="bold" font-family="Liberation Sans" fill="#cfcfcf">Current</text><text x="6" y="39.5" font-size="2.4" font-family="Liberation Sans" fill="#888">71 BPM, 1m ago</text><text x="31" y="6.5" font-size="3.2" font-weight="bold" font-family="Liberation Sans" fill="#ddd">10:09</text></g><line x1="984" y1="252" x2="1029.8" y2="253" stroke="#f5962e" stroke-width="1.2" stroke-opacity="1.0"/><circle cx="984" cy="252" r="2.2" fill="#f5962e"/><path d="M862 276.3V290.8M862 301.8V316.3M844 296.3H856.5M867.5 296.3H880" stroke="#111" stroke-width="1.1"/><circle cx="862" cy="296.3" r="9.5" fill="none" stroke="#fff" stroke-width="1.3"/><circle cx="862" cy="296.3" r="9.5" fill="none" stroke="#e03030" stroke-width="1.3" stroke-dasharray="3.7 3.7"/><line x1="1114.5" y1="0" x2="1110.5" y2="274" stroke="#9a9a9a" stroke-width="1.0" stroke-opacity="1.0"/><circle cx="1110.5" cy="274.5" r="1.6" fill="none" stroke="#9a9a9a" stroke-width="0.8"/><path d="M1131.7,274 L1239.1,269.3 L1232.9,343.2 L1126.5,353.6 Z M1131.7,274 L1348.6,349.4 M1239.1,269.3 L1348.6,349.4 M1232.9,343.2 L1348.6,349.4 M1126.5,353.6 L1348.6,349.4" fill="none" stroke="#000" stroke-width="1.1"/><path d="M1190.5,215.5 L1223.5,262.8 L1149,266.5 Z" fill="#000"/></svg>
<div class="a" style="left:0;top:0;width:1289px;height:27.5px;background:rgba(40,40,40,0.66)"></div>
<div class="a" style="left:0;top:27.5px;width:111px;height:24px;background:rgba(40,40,40,0.66);border-radius:0 0 6px 0"></div>
<div class="a" style="left:1205px;top:27.5px;width:84px;height:24px;background:rgba(40,40,40,0.66);border-radius:0 0 0 6px"></div>
</div>
<div class="a" style="left:298px;top:5px;width:31px;height:20px;background:#2a2a2a;border-radius:4px;"></div>
<svg class="a" style="left:302.5px;top:7.0px" width="15" height="16" viewBox="0 0 15 16" ><path d="M1.4 7.7H7.5M0.4 11.2H14.4M3.3 5.5L2.8 15M11.3 8.7L11.6 15" stroke="#d8d8d8" stroke-width="1.1"/><circle cx="10.9" cy="4.6" r="3.5" fill="#e8e8e8"/><path d="M9.2 4.2 A1.8 1.8 0 0 1 10.6 2.6" stroke="#555" stroke-width="0.8" fill="none"/></svg>
<svg class="a" style="left:317.0px;top:11.0px" width="10" height="8" viewBox="0 0 10 8" ><path d="M1.5 2 L5 5.5 L8.5 2" fill="none" stroke="#d8d8d8" stroke-width="1.3" stroke-linecap="round" stroke-linejoin="round"/></svg>
<div class="a" style="left:335px;top:5px;width:111px;height:20px;background:#2a2a2a;border-radius:4px;"></div>
<svg class="a" style="left:341.0px;top:8.0px" width="14" height="14" viewBox="0 0 14 14" ><path d="M1 4V1h3M10 1h3v3M13 10v3h-3M4 13H1v-3" fill="none" stroke="#e6e6e6" stroke-width="1.2"/><rect x="3.5" y="3.5" width="7" height="7" fill="#e6e6e6"/></svg>
<div class="t" style="left:361px;top:8px;">Object Mode</div>
<svg class="a" style="left:432.0px;top:11.0px" width="10" height="8" viewBox="0 0 10 8" ><path d="M1.5 2 L5 5.5 L8.5 2" fill="none" stroke="#d8d8d8" stroke-width="1.3" stroke-linecap="round" stroke-linejoin="round"/></svg>
<div class="t" style="left:458px;top:8px;">View</div>
<div class="t" style="left:499px;top:8px;">Select</div>
<div class="t" style="left:546px;top:8px;">Add</div>
<div class="t" style="left:583px;top:8px;">Object</div>
<div class="a" style="left:808px;top:5px;width:77px;height:20px;background:#2a2a2a;border-radius:4px;"></div>
<svg class="a" style="left:814.0px;top:7.0px" width="16" height="16" viewBox="0 0 16 16" ><path d="M2.5 2 V13.5 H14" fill="none" stroke="#e0e0e0" stroke-width="1.2"/><path d="M2.5 13.5 L11 5" stroke="#e0e0e0" stroke-width="1.2"/><path d="M0.5 4 L2.5 1 L4.5 4 M12 11.5 L15 13.5 L12 15.5 M8 5 H11.5 V8.5" fill="none" stroke="#e0e0e0" stroke-width="1.2"/><circle cx="2.5" cy="13.5" r="1.6" fill="#303030" stroke="#e0e0e0" stroke-width="1"/></svg>
<div class="t" style="left:834px;top:8px;">Global</div>
<svg class="a" style="left:871.0px;top:11.0px" width="10" height="8" viewBox="0 0 10 8" ><path d="M1.5 2 L5 5.5 L8.5 2" fill="none" stroke="#d8d8d8" stroke-width="1.3" stroke-linecap="round" stroke-linejoin="round"/></svg>
<div class="a" style="left:891px;top:5px;width:31px;height:20px;background:#2a2a2a;border-radius:4px;"></div>
<svg class="a" style="left:895.5px;top:7.5px" width="15" height="15" viewBox="0 0 15 15" ><path d="M6 3 A4.3 4.3 0 1 1 12 9" fill="none" stroke="#e0e0e0" stroke-width="1.2"/><path d="M9 12 A4.3 4.3 0 1 1 3 6" fill="none" stroke="#e0e0e0" stroke-width="1.2"/><circle cx="7.5" cy="7.5" r="1.5" fill="#e0e0e0"/></svg>
<svg class="a" style="left:910.0px;top:11.0px" width="10" height="8" viewBox="0 0 10 8" ><path d="M1.5 2 L5 5.5 L8.5 2" fill="none" stroke="#d8d8d8" stroke-width="1.3" stroke-linecap="round" stroke-linejoin="round"/></svg>
<div class="a" style="left:929px;top:5px;width:51px;height:20px;background:#2a2a2a;border-radius:4px;"></div>
<div class="a" style="left:929px;top:5px;width:19px;height:20px;background:#4a4a4a;border-radius:4px 0 0 4px;"></div>
<svg class="a" style="left:930.5px;top:7.5px" width="15" height="15" viewBox="0 0 15 15" ><g transform="rotate(225 7.5 7.5)"><path d="M3 2 V8.5 A4.5 4.5 0 0 0 12 8.5 V2 M6 2 V8.5 A1.5 1.5 0 0 0 9 8.5 V2 M3 2 H6 M9 2 H12" fill="none" stroke="#a8a8a8" stroke-width="1.1"/></g></svg>
<svg class="a" style="left:950.0px;top:8.0px" width="14" height="14" viewBox="0 0 14 14" ><path d="M1 10h12M1.5 7.5v5M5 8v4M8.5 8v4M12.5 7.5v5" stroke="#e0e0e0" stroke-width="1.1"/><rect x="9" y="1" width="3.5" height="3.5" fill="#f0f0f0"/></svg>
<svg class="a" style="left:966.0px;top:11.0px" width="10" height="8" viewBox="0 0 10 8" ><path d="M1.5 2 L5 5.5 L8.5 2" fill="none" stroke="#d8d8d8" stroke-width="1.3" stroke-linecap="round" stroke-linejoin="round"/></svg>
<div class="a" style="left:985px;top:5px;width:51px;height:20px;background:#3d3d3d;border-radius:4px;"></div>
<div class="a" style="left:985px;top:5px;width:20px;height:20px;background:#4a4a4a;border-radius:4px 0 0 4px;"></div>
<svg class="a" style="left:988.0px;top:8.0px" width="14" height="14" viewBox="0 0 14 14" ><circle cx="7" cy="7" r="5.8" fill="none" stroke="#a0a0a0" stroke-width="1.1"/><circle cx="7" cy="7" r="1.8" fill="#e6e6e6"/></svg>
<svg class="a" style="left:1010.0px;top:8.0px" width="14" height="14" viewBox="0 0 14 14" ><path d="M1 13 C4 13 5 1 7 1 C9 1 10 13 13 13" fill="none" stroke="#6a6a6a" stroke-width="1.1"/></svg>
<svg class="a" style="left:1025.0px;top:11.0px" width="10" height="8" viewBox="0 0 10 8" ><path d="M1.5 2 L5 5.5 L8.5 2" fill="none" stroke="#5a5a5a" stroke-width="1.3" stroke-linecap="round" stroke-linejoin="round"/></svg>
<div class="a" style="left:1321px;top:5px;width:31px;height:20px;background:#2a2a2a;border-radius:4px;"></div>
<svg class="a" style="left:1324.0px;top:7.0px" width="16" height="16" viewBox="0 0 16 16" ><path d="M5 6 C7 2.5 13 2.5 15 6 C13 9.5 7 9.5 5 6Z" fill="none" stroke="#e6e6e6" stroke-width="1.2"/><circle cx="10" cy="6" r="1.8" fill="#e6e6e6"/><path d="M1 8 L8 11 L5 12 L4 15Z" fill="#e6e6e6"/></svg>
<svg class="a" style="left:1340.0px;top:11.0px" width="10" height="8" viewBox="0 0 10 8" ><path d="M1.5 2 L5 5.5 L8.5 2" fill="none" stroke="#d8d8d8" stroke-width="1.3" stroke-linecap="round" stroke-linejoin="round"/></svg>
<div class="a" style="left:1359px;top:5px;width:38px;height:20px;background:#2a2a2a;border-radius:4px;"></div>
<div class="a" style="left:1359px;top:5px;width:18px;height:20px;background:#4772b3;border-radius:4px 0 0 4px;"></div>
<svg class="a" style="left:1360.5px;top:7.0px" width="15" height="16" viewBox="0 0 15 16" ><path d="M2 14 C3 7 7 3 13 2" fill="none" stroke="#e6e6e6" stroke-width="1.2"/><circle cx="3" cy="13" r="1.7" fill="none" stroke="#e6e6e6" stroke-width="1.1"/><path d="M5 11 L12 4 M8.5 3.5 H12.5 V7.5" fill="none" stroke="#e6e6e6" stroke-width="1.2"/></svg>
<svg class="a" style="left:1383.0px;top:11.0px" width="10" height="8" viewBox="0 0 10 8" ><path d="M1.5 2 L5 5.5 L8.5 2" fill="none" stroke="#d8d8d8" stroke-width="1.3" stroke-linecap="round" stroke-linejoin="round"/></svg>
<div class="a" style="left:1404px;top:5px;width:38px;height:20px;background:#2a2a2a;border-radius:4px;"></div>
<div class="a" style="left:1404px;top:5px;width:18px;height:20px;background:#4772b3;border-radius:4px 0 0 4px;"></div>
<svg class="a" style="left:1405.0px;top:7.0px" width="16" height="16" viewBox="0 0 16 16" ><circle cx="9" cy="6.5" r="5" fill="#e6e6e6"/><circle cx="6.5" cy="9.5" r="5" fill="none" stroke="#e6e6e6" stroke-width="1.3"/><circle cx="9.5" cy="7" r="2" fill="#4772b3"/></svg>
<svg class="a" style="left:1428.0px;top:11.0px" width="10" height="8" viewBox="0 0 10 8" ><path d="M1.5 2 L5 5.5 L8.5 2" fill="none" stroke="#d8d8d8" stroke-width="1.3" stroke-linecap="round" stroke-linejoin="round"/></svg>
<div class="a" style="left:1449px;top:5px;width:19px;height:20px;background:#3a3a3a;border-radius:4px;"></div>
<svg class="a" style="left:1450.5px;top:7.5px" width="15" height="15" viewBox="0 0 15 15" ><rect x="1" y="4.5" width="9" height="9" fill="none" stroke="#606060" stroke-width="1.1"/><rect x="4.5" y="1" width="9" height="9" fill="none" stroke="#606060" stroke-width="1.1"/></svg>
<div class="a" style="left:1474px;top:5px;width:95px;height:20px;background:#2a2a2a;border-radius:4px;"></div>
<div class="a" style="left:1474px;top:5px;width:19px;height:20px;background:#3d3d3d;border-radius:4px 0 0 4px;"></div>
<div class="a" style="left:1493px;top:5px;width:19px;height:20px;background:#3d3d3d;border-radius:0px;"></div>
<div class="a" style="left:1512px;top:5px;width:18px;height:20px;background:#3d3d3d;border-radius:0px;"></div>
<div class="a" style="left:1530px;top:5px;width:19px;height:20px;background:#4772b3;border-radius:0px;"></div>
<svg class="a" style="left:1475.5px;top:7.5px" width="15" height="15" viewBox="0 0 15 15" ><circle cx="7.5" cy="7.5" r="6.3" fill="none" stroke="#dcdcdc" stroke-width="1.1"/><ellipse cx="7.5" cy="7.5" rx="3" ry="6.3" fill="none" stroke="#dcdcdc" stroke-width="1.1"/><path d="M1.5 5.5h12M1.5 9.5h12" stroke="#dcdcdc" stroke-width="1.1"/></svg>
<svg class="a" style="left:1494.5px;top:7.5px" width="15" height="15" viewBox="0 0 15 15" ><circle cx="7.5" cy="7.5" r="6.5" fill="#b4b4b4"/></svg>
<svg class="a" style="left:1513.5px;top:7.5px" width="15" height="15" viewBox="0 0 15 15" ><circle cx="7.5" cy="7.5" r="6.2" fill="none" stroke="#dcdcdc" stroke-width="1.2"/><path d="M7.5 1.3 V7.5 H13.7 A6.2 6.2 0 0 1 7.5 13.7 A6.2 6.2 0 0 1 1.3 7.5 A6.2 6.2 0 0 1 7.5 1.3Z" fill="#c8c8c8"/><path d="M7.5 1.3 V7.5 H13.7" fill="none" stroke="#333" stroke-width="0.6"/></svg>
<svg class="a" style="left:1532.5px;top:7.5px" width="15" height="15" viewBox="0 0 15 15" ><circle cx="7.5" cy="7.5" r="6.2" fill="none" stroke="#eeeeee" stroke-width="1.3"/><path d="M3.5 6 A4 4 0 0 1 6.5 3" fill="none" stroke="#eeeeee" stroke-width="1.3"/><path d="M9 12 L12 9" stroke="#eeeeee" stroke-width="0.8" stroke-dasharray="1 1"/></svg>
<svg class="a" style="left:1555.0px;top:11.0px" width="10" height="8" viewBox="0 0 10 8" ><path d="M1.5 2 L5 5.5 L8.5 2" fill="none" stroke="#d8d8d8" stroke-width="1.3" stroke-linecap="round" stroke-linejoin="round"/></svg>
<div class="a" style="left:297px;top:32px;width:96px;height:19px;background:#454545;border-radius:4px;"></div>
<div class="a" style="left:297px;top:32px;width:19px;height:19px;background:#4772b3;border-radius:4px 0 0 4px;"></div>
<svg class="a" style="left:299.5px;top:34.5px" width="14" height="14" viewBox="0 0 14 14" ><rect x="1.5" y="1.5" width="11" height="11" fill="none" stroke="#fff" stroke-width="1.2" stroke-dasharray="2 1.5"/></svg>
<svg class="a" style="left:318.5px;top:34.5px" width="14" height="14" viewBox="0 0 14 14" ><path d="M1 6 H5 V1 H13 V9 H9 V14 H1Z" fill="#c8c8c8"/></svg>
<svg class="a" style="left:337.5px;top:34.5px" width="14" height="14" viewBox="0 0 14 14" ><path d="M1 5.5H8.5V13H1Z" fill="none" stroke="#c8c8c8" stroke-width="1" stroke-dasharray="1.6 1.4"/><path d="M5 1H13V9H8.5V5.5H5Z" fill="#c8c8c8"/></svg>
<svg class="a" style="left:356.5px;top:34.5px" width="14" height="14" viewBox="0 0 14 14" ><path d="M5 1H13V9H9V5H5Z M1 5H5V9H9V13H1Z" fill="#c8c8c8"/></svg>
<svg class="a" style="left:375.5px;top:34.5px" width="14" height="14" viewBox="0 0 14 14" ><rect x="1.5" y="1.5" width="11" height="11" fill="none" stroke="#c8c8c8" stroke-width="1" stroke-dasharray="1.8 1.6"/><rect x="4.5" y="4.5" width="5" height="5" fill="#c8c8c8"/></svg>
<div class="a" style="left:316px;top:32px;width:1px;height:19px;background:#363636;border-radius:0px;"></div>
<div class="a" style="left:335px;top:32px;width:1px;height:19px;background:#363636;border-radius:0px;"></div>
<div class="a" style="left:354px;top:32px;width:1px;height:19px;background:#363636;border-radius:0px;"></div>
<div class="a" style="left:373px;top:32px;width:1px;height:19px;background:#363636;border-radius:0px;"></div>
<svg class="a" style="left:0;top:0" width="1578" height="968"><line x1="1527" y1="106" x2="1527" y2="73" stroke="#3c8ce0" stroke-width="2"/><line x1="1527" y1="106" x2="1513.4" y2="101.8" stroke="#6aa02c" stroke-width="2"/><line x1="1527" y1="106" x2="1555.7" y2="103.4" stroke="#e04a5a" stroke-width="2"/><circle cx="1498" cy="106.3" r="7.2" fill="#7a3a46" stroke="#e0405a" stroke-width="1.2"/><circle cx="1527.2" cy="136.7" r="7.2" fill="#41628e" stroke="#3d84d8" stroke-width="1.2"/><circle cx="1513.4" cy="101.8" r="7.5" fill="#5d8a22"/><text x="1513.4" y="105.8" text-anchor="middle" font-size="11" font-family="Liberation Sans" fill="#1b1b1b">Y</text><circle cx="1540.7" cy="107" r="7.6" fill="#4d6730" stroke="#8ad62a" stroke-width="1.4"/><circle cx="1527.2" cy="73" r="8" fill="#2f80da"/><text x="1527.2" y="77.2" text-anchor="middle" font-size="11" font-family="Liberation Sans" fill="#101828">Z</text><circle cx="1555.7" cy="103.4" r="7.8" fill="#d3364e"/><text x="1555.7" y="107.6" text-anchor="middle" font-size="11" font-family="Liberation Sans" fill="#201010">X</text><circle cx="1555" cy="159.7" r="13.5" fill="#282828" fill-opacity="0.36"/><g transform="translate(1555,159.7)"><circle cx="2" cy="-2" r="5" fill="none" stroke="#e8e8e8" stroke-width="1.3"/><path d="M2 -5v6M-1 -2h6" stroke="#e8e8e8" stroke-width="1.1"/><path d="M-1.5 1.5 L-6 6" stroke="#e8e8e8" stroke-width="2.2" stroke-linecap="round"/></g><circle cx="1555" cy="190" r="13.5" fill="#282828" fill-opacity="0.36"/><g transform="translate(1555,190)"><path d="M-5 -1 L-5 -5 M-2.5 -1 L-2.5 -7 M0 -1 L0 -7.5 M2.5 -1 L2.5 -6 M-5.5 0 C-6.5 5 -3 7 0 7 C4 7 5 4 5 1 L6 -3" fill="none" stroke="#eeeeee" stroke-width="2.2" stroke-linecap="round"/><path d="M-5 0 C-5 5 -3 6.5 0 6.5 C3.5 6.5 4.5 4 4.5 1 L4.5 -2 L-5 -2Z" fill="#eeeeee"/></g><circle cx="1555" cy="219.8" r="13.5" fill="#282828" fill-opacity="0.36"/><g transform="translate(1555,219.8)"><circle cx="-3" cy="-3" r="3" fill="none" stroke="#e8e8e8" stroke-width="1.2"/><circle cx="3" cy="-3" r="3" fill="none" stroke="#e8e8e8" stroke-width="1.2"/><rect x="-4" y="1" width="7" height="5" fill="none" stroke="#e8e8e8" stroke-width="1.2"/><path d="M4 3.5 L7 1.5 V5.5Z" fill="none" stroke="#e8e8e8" stroke-width="1"/><path d="M-7 -1h3M-5.5 -2.5v3" stroke="#e8e8e8" stroke-width="0.8"/></g><circle cx="1555" cy="250" r="13.5" fill="#282828" fill-opacity="0.36"/><g transform="translate(1555,250)"><path d="M-4 -5 H4 L6 5 H-6Z M-5 0 H5 M-1.5 -5 L-2.2 5 M1.5 -5 L2.2 5" fill="none" stroke="#e8e8e8" stroke-width="1.1"/></g></svg>
<div class="a" style="left:1568px;top:77px;width:12px;height:18px;background:rgba(120,120,120,0.35);border-radius:4px;"></div>
<svg class="a" style="left:1570.0px;top:81.0px" width="6" height="10" viewBox="0 0 6 10" ><path d="M4.5 1 L1.5 5 L4.5 9" fill="none" stroke="#9a9a9a" stroke-width="1.1"/></svg>
<div class="a" style="left:1503px;top:32px;width:66px;height:19px;background:#2a2a2a;border-radius:4px;"></div>
<div class="t" style="left:1510px;top:34px;">Options</div>
<svg class="a" style="left:1556.0px;top:38.0px" width="10" height="8" viewBox="0 0 10 8" ><path d="M1.5 2 L5 5.5 L8.5 2" fill="none" stroke="#d8d8d8" stroke-width="1.3" stroke-linecap="round" stroke-linejoin="round"/></svg>
<div class="a" style="left:297px;top:63px;width:40px;height:70px;background:#2a2a2a;border-radius:5px;"></div>
<div class="a" style="left:297px;top:63px;width:40px;height:34px;background:#4772b3;border-radius:5px 5px 0 0;"></div>
<svg class="a" style="left:306.0px;top:69.0px" width="22" height="22" viewBox="0 0 22 22" ><path d="M1.5 5.5 V1.5 H5.5 M8.5 1.5 H13.5 M16.5 1.5 H20.5 V5.5 M20.5 8.5 V13.5 M20.5 16.5 V20.5 H16.5 M13.5 20.5 H8.5 M5.5 20.5 H1.5 V16.5 M1.5 13.5 V8.5" fill="none" stroke="#ffaf29" stroke-width="1.8"/><path d="M8 6.5 L8 16 L10.5 13.5 L16 12.5Z" fill="#e8e8e8"/></svg>
<svg class="a" style="left:331px;top:91px" width="4" height="4"><path d="M4 0 L4 4 L0 4Z" fill="#9fb4d6"/></svg>
<svg class="a" style="left:305.0px;top:103.0px" width="24" height="24" viewBox="0 0 24 24" ><circle cx="12" cy="12" r="10.5" fill="none" stroke="#f0f0f0" stroke-width="1.8"/><circle cx="12" cy="12" r="10.5" fill="none" stroke="#b03535" stroke-width="1.8" stroke-dasharray="3.3 4.95" stroke-dashoffset="1.6"/><path d="M12 5.5v4M12 14.5V18.5M5.5 12h4M14.5 12H18.5" stroke="#8c8c8c" stroke-width="1.6"/></svg>
<div class="a" style="left:297px;top:138px;width:40px;height:140px;background:#2a2a2a;border-radius:5px;"></div>
<div class="a" style="left:297px;top:172.5px;width:40px;height:1px;background:#3a3a3a;border-radius:0px;"></div>
<div class="a" style="left:297px;top:207.5px;width:40px;height:1px;background:#3a3a3a;border-radius:0px;"></div>
<div class="a" style="left:297px;top:242.5px;width:40px;height:1px;background:#3a3a3a;border-radius:0px;"></div>
<svg class="a" style="left:305.0px;top:143.0px" width="24" height="24" viewBox="0 0 24 24" ><path d="M12 1 L15.2 4.8 L8.8 4.8Z M12 23 L15.2 19.2 L8.8 19.2Z M1 12 L4.8 8.8 L4.8 15.2Z M23 12 L19.2 8.8 L19.2 15.2Z" fill="#e0e0e0"/><path d="M12 6v3M12 15v3M6 12h3M15 12h3" stroke="#e0e0e0" stroke-width="1.6"/></svg>
<svg class="a" style="left:305.0px;top:178.0px" width="24" height="24" viewBox="0 0 24 24" ><path d="M5 9 A7.5 7.5 0 0 1 18.5 8.5" fill="none" stroke="#e0e0e0" stroke-width="1.3"/><path d="M19 15 A7.5 7.5 0 0 1 5.5 15.5" fill="none" stroke="#e0e0e0" stroke-width="1.3"/><path d="M1.5 11.5 L8 11.5 L4.8 15.8Z M16 12.5 L22.5 12.5 L19.2 8.2Z" fill="#e0e0e0"/><path d="M12 8.8 L15.2 12 L12 15.2 L8.8 12Z" fill="#a0a0a0"/></svg>
<svg class="a" style="left:305.0px;top:213.0px" width="24" height="24" viewBox="0 0 24 24" ><path d="M6 8.5 V3 H20 V17 H14.5" fill="none" stroke="#c8c8c8" stroke-width="1.4"/><rect x="3" y="11" width="10" height="10" fill="#e6e6e6"/><path d="M11.5 12.5 L18 6 M14 6 H18 V10" fill="none" stroke="#e6e6e6" stroke-width="1.4"/></svg>
<svg class="a" style="left:331px;top:236px" width="4" height="4"><path d="M4 0 L4 4 L0 4Z" fill="#9a9a9a"/></svg>
<svg class="a" style="left:305.0px;top:248.0px" width="24" height="24" viewBox="0 0 24 24" ><circle cx="12" cy="12" r="8.8" fill="none" stroke="#e0e0e0" stroke-width="1.2" stroke-dasharray="5.5 1.4" stroke-dashoffset="2.5"/><rect x="7.5" y="7.5" width="9" height="9" fill="#e6e6e6"/><path d="M12 1.5 L14.2 4.5 L9.8 4.5Z M12 22.5 L14.2 19.5 L9.8 19.5Z M1.5 12 L4.5 9.8 L4.5 14.2Z M22.5 12 L19.5 9.8 L19.5 14.2Z" fill="#e0e0e0"/></svg>
<div class="a" style="left:297px;top:283px;width:40px;height:70px;background:#2a2a2a;border-radius:5px;"></div>
<div class="a" style="left:297px;top:317.5px;width:40px;height:1px;background:#3a3a3a;border-radius:0px;"></div>
<svg class="a" style="left:305.0px;top:288.0px" width="24" height="24" viewBox="0 0 24 24" ><path d="M17 1.5 L21 5.5 L9 17.5 L3.5 19 L5 13.5Z" fill="#e6e6e6"/><path d="M15 3.5 L19 7.5" stroke="#2a2a2a" stroke-width="0.9"/><path d="M5.5 20 C9 23 12 18.5 14.5 17 C17.5 15.5 19 17.5 21 20" fill="none" stroke="#74cf9c" stroke-width="1.4"/></svg>
<svg class="a" style="left:331px;top:311px" width="4" height="4"><path d="M4 0 L4 4 L0 4Z" fill="#9a9a9a"/></svg>
<svg class="a" style="left:305.0px;top:323.0px" width="24" height="24" viewBox="0 0 24 24" ><path d="M6 9 A10 10 0 0 1 16 19 L6 19Z" fill="#74cf9c"/><path d="M6.5 6.5 A12.5 12.5 0 0 1 19 19" fill="none" stroke="#74cf9c" stroke-width="1.1"/><rect x="2.5" y="1" width="3.8" height="21" fill="#e6e6e6"/><rect x="2.5" y="18.5" width="20" height="3.5" fill="#e6e6e6"/><path d="M4.5 4h2M4.5 7h2M4.5 10h2M4.5 13h2M4.5 16h2M9 20.5v-2M12 20.5v-2M15 20.5v-2M18 20.5v-2M21 20.5v-2" stroke="#333" stroke-width="0.8"/></svg>
<div class="a" style="left:297px;top:358px;width:40px;height:35px;background:#2a2a2a;border-radius:5px;"></div>
<svg class="a" style="left:305.0px;top:363.0px" width="24" height="24" viewBox="0 0 24 24" ><path d="M5 1v8M1 5h8" stroke="#74cf9c" stroke-width="2.2"/><path d="M8 10.5 L11.5 7 H21.5 V17 L18 20.5 H8Z M8 10.5 H18 V20.5 M18 10.5 L21.5 7" fill="none" stroke="#74cf9c" stroke-width="1.2"/></svg>
<svg class="a" style="left:331px;top:386px" width="4" height="4"><path d="M4 0 L4 4 L0 4Z" fill="#9a9a9a"/></svg>
<div class="t ov" style="left:354px;top:64px;font-size:11.6px">User Perspective</div>
<div class="t ov" style="left:354px;top:82px;font-size:11.6px;letter-spacing:0.22px">(156) iphone | applewatch parent</div>
<div class="a" style="left:0;top:584px;width:869px;height:380px;background:#303030;border-radius:6px;overflow:hidden">
<div class="a" style="left:193px;top:47px;width:676px;height:333px;background:#232323;border-radius:0px;"></div>
<div class="a" style="left:241.3335px;top:47px;width:464.3665000000001px;height:333px;background:#303030;border-radius:0px;"></div>
<div class="a" style="left:215.2px;top:47px;width:1.2px;height:333px;background:#202020;border-radius:0px;"></div>
<div class="a" style="left:238.5px;top:47px;width:1.2px;height:333px;background:#1e1e1e;border-radius:0px;"></div>
<div class="a" style="left:261.8px;top:47px;width:1.2px;height:333px;background:#2a2a2a;border-radius:0px;"></div>
<div class="a" style="left:285.2px;top:47px;width:1.2px;height:333px;background:#232323;border-radius:0px;"></div>
<div class="a" style="left:308.5px;top:47px;width:1.2px;height:333px;background:#2a2a2a;border-radius:0px;"></div>
<div class="a" style="left:331.8px;top:47px;width:1.2px;height:333px;background:#232323;border-radius:0px;"></div>
<div class="a" style="left:355.2px;top:47px;width:1.2px;height:333px;background:#2a2a2a;border-radius:0px;"></div>
<div class="a" style="left:378.5px;top:47px;width:1.2px;height:333px;background:#232323;border-radius:0px;"></div>
<div class="a" style="left:401.8px;top:47px;width:1.2px;height:333px;background:#2a2a2a;border-radius:0px;"></div>
<div class="a" style="left:425.2px;top:47px;width:1.2px;height:333px;background:#232323;border-radius:0px;"></div>
<div class="a" style="left:448.5px;top:47px;width:1.2px;height:333px;background:#2a2a2a;border-radius:0px;"></div>
<div class="a" style="left:471.9px;top:47px;width:1.2px;height:333px;background:#232323;border-radius:0px;"></div>
<div class="a" style="left:495.2px;top:47px;width:1.2px;height:333px;background:#2a2a2a;border-radius:0px;"></div>
<div class="a" style="left:518.5px;top:47px;width:1.2px;height:333px;background:#232323;border-radius:0px;"></div>
<div class="a" style="left:541.9px;top:47px;width:1.2px;height:333px;background:#2a2a2a;border-radius:0px;"></div>
<div class="a" style="left:565.2px;top:47px;width:1.2px;height:333px;background:#232323;border-radius:0px;"></div>
<div class="a" style="left:588.5px;top:47px;width:1.2px;height:333px;background:#2a2a2a;border-radius:0px;"></div>
<div class="a" style="left:611.9px;top:47px;width:1.2px;height:333px;background:#232323;border-radius:0px;"></div>
<div class="a" style="left:635.2px;top:47px;width:1.2px;height:333px;background:#2a2a2a;border-radius:0px;"></div>
<div class="a" style="left:658.5px;top:47px;width:1.2px;height:333px;background:#232323;border-radius:0px;"></div>
<div class="a" style="left:681.9px;top:47px;width:1.2px;height:333px;background:#2a2a2a;border-radius:0px;"></div>
<div class="a" style="left:705.2px;top:47px;width:1.2px;height:333px;background:#232323;border-radius:0px;"></div>
<div class="a" style="left:728.5px;top:47px;width:1.2px;height:333px;background:#202020;border-radius:0px;"></div>
<div class="a" style="left:751.9px;top:47px;width:1.2px;height:333px;background:#1e1e1e;border-radius:0px;"></div>
<div class="a" style="left:775.2px;top:47px;width:1.2px;height:333px;background:#202020;border-radius:0px;"></div>
<div class="a" style="left:798.5px;top:47px;width:1.2px;height:333px;background:#1e1e1e;border-radius:0px;"></div>
<div class="a" style="left:821.9px;top:47px;width:1.2px;height:333px;background:#202020;border-radius:0px;"></div>
<div class="a" style="left:845.2px;top:47px;width:1.2px;height:333px;background:#1e1e1e;border-radius:0px;"></div>
<div class="a" style="left:240.53349999999998px;top:47px;width:1.6px;height:333px;background:#0a0a0a;border-radius:0px;"></div>
<div class="a" style="left:704.9000000000001px;top:47px;width:1.6px;height:333px;background:#0a0a0a;border-radius:0px;"></div>
<div class="a" style="left:0px;top:0px;width:869px;height:25px;background:#303030;border-radius:0px;"></div>
<div class="a" style="left:0px;top:25px;width:869px;height:22px;background:#1d1d1d;border-radius:0px;"></div>
<div class="a" style="left:0px;top:25px;width:193px;height:355px;background:#1d1d1d;border-radius:0px;"></div>
<div class="a" style="left:0px;top:27px;width:168px;height:18px;background:#1d1d1d;border-radius:0px;border:1px solid #2a2a2a;border-left:none"></div>
<svg class="a" style="left:0.0px;top:29.0px" width="14" height="14" viewBox="0 0 14 14" ><circle cx="8.5" cy="5.5" r="4.3" fill="none" stroke="#cfcfcf" stroke-width="1.1"/><path d="M5.5 8.5 L1 13" stroke="#cfcfcf" stroke-width="1.3"/></svg>
<div class="t" style="left:21px;top:29px;color:#7a7a7a;">Search</div>
<div class="a" style="left:168px;top:27px;width:22.5px;height:18px;background:#545454;border-radius:0 4px 4px 0;"></div>
<svg class="a" style="left:172.5px;top:31.0px" width="14" height="10" viewBox="0 0 14 10" ><path d="M1.5 5H12.5M4 2.5L1.5 5L4 7.5M10 2.5L12.5 5L10 7.5" fill="none" stroke="#e8e8e8" stroke-width="1.2"/></svg>
<div class="a" style="left:0px;top:50px;width:193px;height:18px;background:#4e2628;border-radius:0px;"></div>
<div class="a" style="left:0px;top:68px;width:193px;height:16px;background:#1d5089;border-radius:0px;"></div>
<div class="a" style="left:0px;top:86px;width:193px;height:16px;background:#112b4b;border-radius:0px;"></div>
<div class="a" style="left:0px;top:104px;width:193px;height:16px;background:#1d5089;border-radius:0px;"></div>
<div class="a" style="left:0px;top:122px;width:193px;height:16px;background:#112b4b;border-radius:0px;"></div>
<div class="a" style="left:0px;top:84px;width:193px;height:2px;background:#131313;border-radius:0px;"></div>
<div class="a" style="left:0px;top:102px;width:193px;height:2px;background:#131313;border-radius:0px;"></div>
<div class="a" style="left:0px;top:120px;width:193px;height:2px;background:#131313;border-radius:0px;"></div>
<div class="a" style="left:0px;top:138px;width:193px;height:2px;background:#131313;border-radius:0px;"></div>
<svg class="a" style="left:-1.0px;top:54.0px" width="10" height="8" viewBox="0 0 10 8" ><path d="M0.5 2 L4 5.5 L7.5 2" fill="none" stroke="#e6e6e6" stroke-width="1.2"/></svg>
<div class="t" style="left:13.5px;top:51px;color:#d5cccc;">Summary</div>
<svg class="a" style="left:-1.0px;top:71.0px" width="10" height="8" viewBox="0 0 10 8" ><path d="M0.5 2 L4 5.5 L7.5 2" fill="none" stroke="#e6e6e6" stroke-width="1.2"/></svg>
<svg class="a" style="left:11.0px;top:69.0px" width="14" height="14" viewBox="0 0 14 14" ><path d="M6.5 1.5 V8.5 L2 12.5 M6.5 8.5 H12.5" fill="none" stroke="#bdbdbd" stroke-width="2.4" stroke-linecap="round"/></svg>
<div class="t" style="left:30px;top:69px;color:#f0a428;">applewatch parent</div>
<svg class="a" style="left:6.0px;top:88.0px" width="6" height="10" viewBox="0 0 6 10" ><path d="M1 1 L5 5 L1 9" fill="none" stroke="#e6e6e6" stroke-width="1.1"/></svg>
<svg class="a" style="left:16.0px;top:87.0px" width="18" height="16" viewBox="0 0 18 16" ><path d="M0.5 3 L3 0.5 L5.5 3 L3 5.5Z M12.5 3 L15 0.5 L17.5 3 L15 5.5Z" fill="#e6e6e6"/><path d="M5.5 1.3 H12.5 V4.7 H5.5Z" fill="#8a8a8a"/><path d="M6.5 1.5 L9 3 L11.5 1.5 V4.5 L9 3 L6.5 4.5Z" fill="#d8d8d8"/><path d="M9 8 L12 11 L9 14 L6 11Z" fill="none" stroke="#e6e6e6" stroke-width="1.1"/></svg>
<div class="t" style="left:37px;top:87px;color:#dedede;">applewatch parentAction</div>
<svg class="a" style="left:-1.0px;top:107.0px" width="10" height="8" viewBox="0 0 10 8" ><path d="M0.5 2 L4 5.5 L7.5 2" fill="none" stroke="#e6e6e6" stroke-width="1.2"/></svg>
<svg class="a" style="left:11.0px;top:105.0px" width="14" height="14" viewBox="0 0 14 14" ><path d="M6.5 1.5 V8.5 L2 12.5 M6.5 8.5 H12.5" fill="none" stroke="#bdbdbd" stroke-width="2.4" stroke-linecap="round"/></svg>
<div class="t" style="left:30px;top:105px;color:#f0a428;">iphone parent</div>
<svg class="a" style="left:6.0px;top:124.0px" width="6" height="10" viewBox="0 0 6 10" ><path d="M1 1 L5 5 L1 9" fill="none" stroke="#e6e6e6" stroke-width="1.1"/></svg>
<svg class="a" style="left:16.0px;top:123.0px" width="18" height="16" viewBox="0 0 18 16" ><path d="M0.5 3 L3 0.5 L5.5 3 L3 5.5Z M12.5 3 L15 0.5 L17.5 3 L15 5.5Z" fill="#e6e6e6"/><path d="M5.5 1.3 H12.5 V4.7 H5.5Z" fill="#8a8a8a"/><path d="M6.5 1.5 L9 3 L11.5 1.5 V4.5 L9 3 L6.5 4.5Z" fill="#d8d8d8"/><path d="M9 8 L12 11 L9 14 L6 11Z" fill="none" stroke="#e6e6e6" stroke-width="1.1"/></svg>
<div class="t" style="left:37px;top:123px;color:#dedede;">iphone parentAction</div>
<svg class="a" style="left:234.3px;top:51.0px" width="14" height="14" viewBox="0 0 14 14" ><path d="M7 1.3 L12.7 7 L7 12.7 L1.3 7Z" fill="#d0d0d0" stroke="#111" stroke-width="1"/></svg>
<svg class="a" style="left:290.5px;top:51.0px" width="14" height="14" viewBox="0 0 14 14" ><path d="M7 1.3 L12.7 7 L7 12.7 L1.3 7Z" fill="#d0d0d0" stroke="#111" stroke-width="1"/></svg>
<svg class="a" style="left:791.2px;top:51.0px" width="14" height="14" viewBox="0 0 14 14" ><path d="M7 1.3 L12.7 7 L7 12.7 L1.3 7Z" fill="#f5a623" stroke="#111" stroke-width="1"/></svg>
<svg class="a" style="left:234.3px;top:69.0px" width="14" height="14" viewBox="0 0 14 14" ><path d="M7 1.3 L12.7 7 L7 12.7 L1.3 7Z" fill="#d0d0d0" stroke="#111" stroke-width="1"/></svg>
<svg class="a" style="left:290.5px;top:69.0px" width="14" height="14" viewBox="0 0 14 14" ><path d="M7 1.3 L12.7 7 L7 12.7 L1.3 7Z" fill="#d0d0d0" stroke="#111" stroke-width="1"/></svg>
<svg class="a" style="left:791.2px;top:69.0px" width="14" height="14" viewBox="0 0 14 14" ><path d="M7 1.3 L12.7 7 L7 12.7 L1.3 7Z" fill="#f5a623" stroke="#111" stroke-width="1"/></svg>
<svg class="a" style="left:234.3px;top:87.0px" width="14" height="14" viewBox="0 0 14 14" ><path d="M7 1.3 L12.7 7 L7 12.7 L1.3 7Z" fill="#d0d0d0" stroke="#111" stroke-width="1"/></svg>
<svg class="a" style="left:290.5px;top:87.0px" width="14" height="14" viewBox="0 0 14 14" ><path d="M7 1.3 L12.7 7 L7 12.7 L1.3 7Z" fill="#d0d0d0" stroke="#111" stroke-width="1"/></svg>
<svg class="a" style="left:791.2px;top:87.0px" width="14" height="14" viewBox="0 0 14 14" ><path d="M7 1.3 L12.7 7 L7 12.7 L1.3 7Z" fill="#f5a623" stroke="#111" stroke-width="1"/></svg>
<svg class="a" style="left:234.3px;top:105.0px" width="14" height="14" viewBox="0 0 14 14" ><path d="M7 1.3 L12.7 7 L7 12.7 L1.3 7Z" fill="#d0d0d0" stroke="#111" stroke-width="1"/></svg>
<svg class="a" style="left:290.5px;top:105.0px" width="14" height="14" viewBox="0 0 14 14" ><path d="M7 1.3 L12.7 7 L7 12.7 L1.3 7Z" fill="#d0d0d0" stroke="#111" stroke-width="1"/></svg>
<svg class="a" style="left:791.2px;top:105.0px" width="14" height="14" viewBox="0 0 14 14" ><path d="M7 1.3 L12.7 7 L7 12.7 L1.3 7Z" fill="#f5a623" stroke="#111" stroke-width="1"/></svg>
<svg class="a" style="left:234.3px;top:123.0px" width="14" height="14" viewBox="0 0 14 14" ><path d="M7 1.3 L12.7 7 L7 12.7 L1.3 7Z" fill="#d0d0d0" stroke="#111" stroke-width="1"/></svg>
<svg class="a" style="left:290.5px;top:123.0px" width="14" height="14" viewBox="0 0 14 14" ><path d="M7 1.3 L12.7 7 L7 12.7 L1.3 7Z" fill="#d0d0d0" stroke="#111" stroke-width="1"/></svg>
<svg class="a" style="left:791.2px;top:123.0px" width="14" height="14" viewBox="0 0 14 14" ><path d="M7 1.3 L12.7 7 L7 12.7 L1.3 7Z" fill="#f5a623" stroke="#111" stroke-width="1"/></svg>
<div class="t" style="left:219.0px;top:30px;width:40px;text-align:center;color:#d0d0d0">0</div>
<div class="t" style="left:265.7px;top:30px;width:40px;text-align:center;color:#d0d0d0">20</div>
<div class="t" style="left:312.3px;top:30px;width:40px;text-align:center;color:#d0d0d0">40</div>
<div class="t" style="left:359.0px;top:30px;width:40px;text-align:center;color:#d0d0d0">60</div>
<div class="t" style="left:405.7px;top:30px;width:40px;text-align:center;color:#d0d0d0">80</div>
<div class="t" style="left:452.4px;top:30px;width:40px;text-align:center;color:#d0d0d0">100</div>
<div class="t" style="left:499.0px;top:30px;width:40px;text-align:center;color:#d0d0d0">120</div>
<div class="t" style="left:545.7px;top:30px;width:40px;text-align:center;color:#d0d0d0">140</div>
<div class="t" style="left:592.4px;top:30px;width:40px;text-align:center;color:#d0d0d0">160</div>
<div class="t" style="left:639.0px;top:30px;width:40px;text-align:center;color:#d0d0d0">180</div>
<div class="t" style="left:685.7px;top:30px;width:40px;text-align:center;color:#d0d0d0">200</div>
<div class="t" style="left:732.4px;top:30px;width:40px;text-align:center;color:#d0d0d0">220</div>
<div class="t" style="left:779.0px;top:30px;width:40px;text-align:center;color:#d0d0d0">240</div>
<div class="t" style="left:825.7px;top:30px;width:40px;text-align:center;color:#d0d0d0">260</div>
<div class="a" style="left:602.0260000000001px;top:47px;width:2px;height:333px;background:#4772b3;border-radius:0px;"></div>
<div class="a" style="left:588.0260000000001px;top:28px;width:29px;height:16px;background:#4772b3;border-radius:4px;"></div>
<div class="t" style="left:588.0px;top:29.5px;width:29px;text-align:center;color:#fff;font-weight:bold">156</div>
<svg class="a" style="left:862.0px;top:51.0px" width="6" height="10" viewBox="0 0 6 10" ><path d="M4.5 1 L1.5 5 L4.5 9" fill="none" stroke="#8a8a8a" stroke-width="1.1"/></svg>
<div class="a" style="left:205px;top:375px;width:653px;height:3px;background:#3a3a3a;border-radius:2px;"></div>
<div class="a" style="left:2px;top:3px;width:31px;height:19px;background:#282828;border-radius:4px;border:1px solid #363636"></div>
<svg class="a" style="left:6.0px;top:5.5px" width="14" height="14" viewBox="0 0 14 14" ><circle cx="7" cy="7" r="6.3" fill="#e6e6e6"/><path d="M8.5 3 L5.5 7 L8.5 11" fill="none" stroke="#282828" stroke-width="1.8"/></svg>
<svg class="a" style="left:21.5px;top:8.5px" width="10" height="8" viewBox="0 0 10 8" ><path d="M1.5 2 L5 5.5 L8.5 2" fill="none" stroke="#d8d8d8" stroke-width="1.3" stroke-linecap="round" stroke-linejoin="round"/></svg>
<div class="a" style="left:38.5px;top:3px;width:131.5px;height:19px;background:#282828;border-radius:4px;border:1px solid #363636"></div>
<div class="a" style="left:109.5px;top:3px;width:1px;height:19px;background:#363636;border-radius:0px;"></div>
<div class="t" style="left:46px;top:5.5px;">Playback</div>
<svg class="a" style="left:98.5px;top:8.5px" width="10" height="8" viewBox="0 0 10 8" ><path d="M1.5 2 L5 5.5 L8.5 2" fill="none" stroke="#d8d8d8" stroke-width="1.3" stroke-linecap="round" stroke-linejoin="round"/></svg>
<div class="t" style="left:117px;top:5.5px;">Keying</div>
<svg class="a" style="left:157.0px;top:8.5px" width="10" height="8" viewBox="0 0 10 8" ><path d="M1.5 2 L5 5.5 L8.5 2" fill="none" stroke="#d8d8d8" stroke-width="1.3" stroke-linecap="round" stroke-linejoin="round"/></svg>
<div class="t" style="left:180px;top:5.5px;">View</div>
<div class="t" style="left:221px;top:5.5px;">Marker</div>
<div class="a" style="left:339px;top:3px;width:38px;height:19px;background:#282828;border-radius:4px;"></div>
<div class="a" style="left:339px;top:3px;width:18.5px;height:19px;background:#454545;border-radius:4px 0 0 4px;"></div>
<svg class="a" style="left:342.0px;top:6.5px" width="12" height="12" viewBox="0 0 12 12" ><circle cx="6" cy="6" r="4.8" fill="none" stroke="#c8c8c8" stroke-width="1"/></svg>
<svg class="a" style="left:362.0px;top:8.5px" width="10" height="8" viewBox="0 0 10 8" ><path d="M1.5 2 L5 5.5 L8.5 2" fill="none" stroke="#5a5a5a" stroke-width="1.3" stroke-linecap="round" stroke-linejoin="round"/></svg>
<div class="a" style="left:384px;top:3px;width:118px;height:19px;background:#454545;border-radius:4px;"></div>
<div class="a" style="left:403.66px;top:3px;width:1px;height:19px;background:#393939;border-radius:0px;"></div>
<div class="a" style="left:423.32px;top:3px;width:1px;height:19px;background:#393939;border-radius:0px;"></div>
<div class="a" style="left:442.98px;top:3px;width:1px;height:19px;background:#393939;border-radius:0px;"></div>
<div class="a" style="left:462.64px;top:3px;width:1px;height:19px;background:#393939;border-radius:0px;"></div>
<div class="a" style="left:482.3px;top:3px;width:1px;height:19px;background:#393939;border-radius:0px;"></div>
<svg class="a" style="left:386.8px;top:5.5px" width="14" height="14" viewBox="0 0 14 14" ><rect x="2" y="2" width="2" height="10" fill="#e8e8e8"/><path d="M12 2 L5 7 L12 12Z" fill="#e8e8e8"/></svg>
<svg class="a" style="left:406.5px;top:5.5px" width="14" height="14" viewBox="0 0 14 14" ><path d="M4.5 2.5 L9 7 L4.5 11.5 L0 7Z M14 3 L9.5 7 L14 11Z" fill="#e8e8e8"/></svg>
<svg class="a" style="left:426.1px;top:5.5px" width="14" height="14" viewBox="0 0 14 14" ><path d="M11 1.5 L3 7 L11 12.5Z" fill="#e8e8e8"/></svg>
<svg class="a" style="left:445.8px;top:5.5px" width="14" height="14" viewBox="0 0 14 14" ><path d="M3 1.5 L11 7 L3 12.5Z" fill="#e8e8e8"/></svg>
<svg class="a" style="left:465.5px;top:5.5px" width="14" height="14" viewBox="0 0 14 14" ><path d="M0 3 L4.5 7 L0 11Z M9.5 2.5 L14 7 L9.5 11.5 L5 7Z" fill="#e8e8e8"/></svg>
<svg class="a" style="left:485.1px;top:5.5px" width="14" height="14" viewBox="0 0 14 14" ><rect x="10" y="2" width="2" height="10" fill="#e8e8e8"/><path d="M2 2 L9 7 L2 12Z" fill="#e8e8e8"/></svg>
<div class="a" style="left:588px;top:3px;width:73px;height:19px;background:#545454;border-radius:4px;"></div>
<div class="t" style="left:588px;top:5.5px;width:73px;text-align:center">156</div>
<div class="a" style="left:667px;top:3px;width:194.5px;height:19px;background:#545454;border-radius:4px;"></div>
<div class="a" style="left:667px;top:3px;width:20px;height:19px;background:#454545;border-radius:4px 0 0 4px;"></div>
<div class="a" style="left:775px;top:3px;width:1px;height:19px;background:#3d3d3d;border-radius:0px;"></div>
<svg class="a" style="left:670.0px;top:5.5px" width="14" height="14" viewBox="0 0 14 14" ><circle cx="7" cy="8" r="5" fill="none" stroke="#d8d8d8" stroke-width="1.1"/><path d="M5 1.5h4M7 1.5V3M7 8V5.5M11 3.5 L12.5 2" stroke="#d8d8d8" stroke-width="1.1"/></svg>
<div class="t" style="left:702px;top:5.5px;">Start</div>
<div class="t" style="left:755px;top:5.5px;">1</div>
<div class="t" style="left:791px;top:5.5px;">End</div>
<div class="t" style="left:827px;top:5.5px;">200</div>
</div>
<div id="cam" class="a" style="left:873px;top:584px;width:705px;height:380px;border-radius:6px;overflow:hidden;background:linear-gradient(90deg,#5f5f5f 0%,#8a8a8a 20%,#989898 60%,#9a9a9a 100%)">
<svg class="a" style="left:-873px;top:-584px" width="1578" height="968"><defs><linearGradient id="cfg" x1="0" y1="0" x2="1" y2="0.3"><stop offset="0" stop-color="#c9c9c9"/><stop offset="0.5" stop-color="#d1d1d1"/><stop offset="1" stop-color="#cdcdcd"/></linearGradient></defs><rect x="971" y="630.5" width="510" height="287" fill="url(#cfg)"/><line x1="873" y1="837.5" x2="1578" y2="836.5" stroke="#b88a8e" stroke-opacity="0.45" stroke-width="1"/><line x1="873" y1="844" x2="1578" y2="843" stroke="#999" stroke-opacity="0.2" stroke-width="1"/><line x1="873" y1="853" x2="1578" y2="852" stroke="#999" stroke-opacity="0.18" stroke-width="1"/><line x1="873" y1="868.4" x2="1578" y2="867.4" stroke="#999" stroke-opacity="0.25" stroke-width="1"/><line x1="873" y1="904.4" x2="1578" y2="903.4" stroke="#999" stroke-opacity="0.3" stroke-width="1"/><line x1="1251" y1="827" x2="1306" y2="968" stroke="#888" stroke-opacity="0.3"/><line x1="1381" y1="834" x2="1578" y2="872" stroke="#999" stroke-opacity="0.35"/><line x1="940" y1="878" x2="1100" y2="845" stroke="#8da46e" stroke-opacity="0.6"/><line x1="1025" y1="795.2" x2="1218.4" y2="733" stroke="#ee5a2a" stroke-width="1.1" stroke-opacity="1.0"/><line x1="1086.6" y1="645.7" x2="1103.7" y2="697" stroke="#ee5a2a" stroke-width="1.1" stroke-opacity="1.0"/><defs><linearGradient id="pg3" x1="0" y1="0" x2="0" y2="1"><stop offset="0" stop-color="#9587dc"/><stop offset="0.11" stop-color="#a48dcc"/><stop offset="0.19" stop-color="#b893ae"/><stop offset="0.25" stop-color="#cf9a8e"/><stop offset="0.30" stop-color="#d49f84"/><stop offset="0.34" stop-color="#c8b0aa"/><stop offset="0.39" stop-color="#c2c6d6"/><stop offset="0.46" stop-color="#c3cee2"/><stop offset="1" stop-color="#c2cbd8"/></linearGradient></defs><g transform="matrix(1.4375,-0.2000,0.2043,1.3441,1051.00,656.00)"><rect x="2.5" y="1" width="80" height="184" rx="12" fill="#f2f2f4"/><rect x="0" y="0" width="80" height="186" rx="11" fill="#19191b"/><rect x="1.8" y="1.8" width="76.4" height="182.4" rx="9.5" fill="url(#pg3)"/><rect x="30.0" y="3.8" width="20" height="5.5" rx="2.75" fill="#0a0a0e"/><text x="6" y="32.5" font-size="7.5" font-family="Liberation Sans" fill="#3b3048" fill-opacity="0.9">Summary</text><circle cx="70" cy="29.5" r="3.4" fill="#e58a70" stroke="#f0b9a8" stroke-width="0.8"/><circle cx="70" cy="29.5" r="1.5" fill="#8a6a60"/><text x="9" y="43.5" font-size="4" font-family="Liberation Sans" fill="#333" fill-opacity="0.8">Pinned</text><rect x="5.5" y="48" width="21" height="9.5" rx="4.75" fill="#efeaec" fill-opacity="0.85"/><circle cx="10.5" cy="52.8" r="1.7" fill="#e2474b"/><text x="14" y="54" font-size="3" font-family="Liberation Sans" fill="#e25a60">Heart</text><circle cx="34" cy="52.5" r="4.6" fill="#eeedf1" fill-opacity="0.8"/><circle cx="34" cy="52.5" r="1.3" fill="#e8553a" fill-opacity="0.8"/><circle cx="45" cy="52.28" r="4.6" fill="#eeedf1" fill-opacity="0.8"/><circle cx="45" cy="52.5" r="1.3" fill="#7cc08a" fill-opacity="0.8"/><circle cx="56" cy="52.06" r="4.6" fill="#eeedf1" fill-opacity="0.8"/><circle cx="56" cy="52.5" r="1.3" fill="#5ab0c0" fill-opacity="0.8"/><circle cx="67" cy="51.84" r="4.6" fill="#eeedf1" fill-opacity="0.8"/><circle cx="67" cy="52.5" r="1.3" fill="#4a80d0" fill-opacity="0.8"/><rect x="6" y="61" width="68" height="28" rx="5" fill="#e9ebf0" fill-opacity="0.72"/><rect x="6" y="95" width="68" height="27" rx="5" fill="#e9ebf0" fill-opacity="0.72"/><rect x="6" y="127" width="68" height="20" rx="5" fill="#e9ebf0" fill-opacity="0.72"/><rect x="7" y="149.5" width="66" height="4.5" rx="2.2" fill="#e6e9ee" fill-opacity="0.55"/><rect x="7" y="156" width="66" height="7" rx="3.5" fill="#e8eaef" fill-opacity="0.7"/><text x="10" y="67" font-size="3.2" font-family="Liberation Sans" fill="#e25a60">Heart Rate</text><text x="56" y="65" font-size="2.6" font-family="Liberation Sans" fill="#888">Sept 2025 &gt;</text><text x="10" y="79" font-size="2.8" font-family="Liberation Sans" fill="#666">Latest</text><text x="10" y="86" font-size="7" font-family="Liberation Sans" fill="#555">66</text><text x="19" y="86" font-size="2.6" font-family="Liberation Sans" fill="#777">BPM</text><text x="10" y="101" font-size="3.2" font-family="Liberation Sans" fill="#e25a60">Heart Rate Variability</text><text x="10" y="112" font-size="2.8" font-family="Liberation Sans" fill="#666">Average</text><text x="10" y="118.5" font-size="7" font-family="Liberation Sans" fill="#555">40</text><path d="M58 82 v-8 M60 80 v-6 M62 83 v-9 M64 79 v-5 M66 81 v-10 M68 78 v-6 M70 80 v-12 M72 82 v-8" stroke="#e07070" stroke-width="0.6"/><path d="M55 113 l5 -2 l5 1.5 l4 -1.5 l3 1 l1 -8" fill="none" stroke="#999" stroke-width="0.4"/><text x="10" y="133" font-size="3" font-family="Liberation Sans" fill="#e25a60">AI Analysis</text><path d="M10 138h56M10 141h50" stroke="#8a8a8a" stroke-width="0.6" stroke-opacity="0.7"/><path d="M11.5 160.5 l1.5 -1.5 a1 1 0 0 0 -1.5 -1 a1 1 0 0 0 -1.5 1Z" fill="#e2474b"/><text x="15" y="161" font-size="3.2" font-family="Liberation Sans" fill="#e25a60">Show All Heart Data</text><rect x="6" y="167" width="35" height="13" rx="6.5" fill="#e4e7ed" fill-opacity="0.7"/><rect x="7" y="168" width="18" height="11" rx="5.5" fill="#d6dae2" fill-opacity="0.8"/><path d="M15.5 175.5 l2.5 -2.5 a1.3 1.3 0 0 0 -2.5 -1.4 a1.3 1.3 0 0 0 -2.5 1.4Z" fill="#3b82f0"/><circle cx="31" cy="172" r="1.3" fill="#444"/><circle cx="34" cy="172" r="1.3" fill="#444"/><path d="M29 175h7" stroke="#444" stroke-width="1.2"/><circle cx="70.5" cy="172" r="5.5" fill="#e4e7ed" fill-opacity="0.6"/><circle cx="70" cy="171.5" r="1.5" fill="none" stroke="#777" stroke-width="0.5"/></g><line x1="1086.6" y1="645.7" x2="1103.7" y2="697" stroke="#ee5a2a" stroke-width="1.1" stroke-opacity="1.0"/><line x1="1025" y1="795.2" x2="1115.7" y2="767.8" stroke="#ee5a2a" stroke-width="1.1" stroke-opacity="1.0"/><line x1="1063" y1="788" x2="1102" y2="776" stroke="#ee5a2a" stroke-width="0.9" stroke-opacity="1.0"/><line x1="1138" y1="760.3" x2="1218.4" y2="733" stroke="#ee5a2a" stroke-width="1.1" stroke-opacity="1.0"/><line x1="1183" y1="752" x2="1210" y2="743" stroke="#ee5a2a" stroke-width="0.9" stroke-opacity="1.0"/><circle cx="1125.6" cy="764.8" r="3.4" fill="#ee5a2a" stroke="#333" stroke-width="0.7"/><line x1="1355.3" y1="661.6" x2="1261.2" y2="902.3" stroke="#f5962e" stroke-width="1.1" stroke-opacity="1.0"/><line x1="1188.8" y1="731" x2="1432.3" y2="827" stroke="#f5962e" stroke-width="1.1" stroke-opacity="1.0"/><defs><radialGradient id="wg4" cx="0.5" cy="0.5" r="0.5"><stop offset="0" stop-color="#c02814"/><stop offset="0.45" stop-color="#7a140c"/><stop offset="0.6" stop-color="#4a0a06"/><stop offset="0.75" stop-color="#2a0604"/><stop offset="1" stop-color="#000" stop-opacity="0"/></radialGradient></defs><path d="M1306,719 L1344,723 L1350,746 L1290,736 Z" fill="#a3a8ad"/><path d="M1300,728 L1346,735 L1350,748 L1288,740 Z" fill="#6f7479"/><path d="M1282,800 L1340,812 L1328,856 L1300,857 Z" fill="#b4b8bc"/><path d="M1282,800 L1296,803 L1305,857 L1298,857 Z" fill="#8e9398"/><g transform="matrix(1.5619,0.2405,-0.2375,1.2875,1283.40,738.50)"><rect x="-2.5" y="-2.5" width="47" height="53" rx="10" fill="#d9d9db"/><rect x="43.5" y="12" width="2.5" height="7" rx="1" fill="#b0b0b0"/><rect x="-1" y="-1" width="44" height="50" rx="8.5" fill="#3a3a3a"/><rect x="0" y="0" width="42" height="48" rx="8" fill="#030303"/><circle cx="21" cy="21" r="16" fill="url(#wg4)"/><path d="M21 29 C12.5 23 12.5 15.5 16.5 14 C18.5 13.3 20.3 14.5 21 16.5 C21.7 14.5 23.5 13.3 25.5 14 C29.5 15.5 29.5 23 21 29Z" fill="#e0401f"/><text x="6" y="35.5" font-size="7" font-weight="bold" font-family="Liberation Sans" fill="#f0f0f0">70</text><text x="14.5" y="35.5" font-size="3.2" font-weight="bold" font-family="Liberation Sans" fill="#e8442a">BPM</text><text x="6" y="28.5" font-size="3.3" font-weight="bold" font-family="Liberation Sans" fill="#cfcfcf">Current</text><text x="6" y="39.5" font-size="2.4" font-family="Liberation Sans" fill="#888">71 BPM, 1m ago</text><text x="31" y="6.5" font-size="3.2" font-weight="bold" font-family="Liberation Sans" fill="#ddd">10:09</text></g><line x1="1325.8" y1="763.8" x2="1308.6" y2="778.9" stroke="#f5962e" stroke-width="1.4" stroke-opacity="1.0"/><circle cx="1308.6" cy="778.9" r="2.3" fill="#f5962e"/><path d="M1127.7 816V832M1127.7 844V860M1107.7 838H1121.7M1133.7 838H1147.7" stroke="#111" stroke-width="1.1"/><circle cx="1127.7" cy="838" r="10" fill="none" stroke="#fff" stroke-width="1.3"/><circle cx="1127.7" cy="838" r="10" fill="none" stroke="#e03030" stroke-width="1.3" stroke-dasharray="3.7 3.7"/><rect x="970.5" y="630.5" width="510.5" height="287" fill="none" stroke="#000" stroke-width="1.2" stroke-dasharray="3 2"/></svg>
<div class="a" style="left:0;top:0;width:705px;height:25px;background:rgba(40,40,40,0.55)"></div>
<div class="a" style="left:0;top:25px;width:112px;height:26px;background:rgba(40,40,40,0.55);border-radius:0 0 6px 0"></div>
<div class="a" style="left:621px;top:25px;width:84px;height:26px;background:rgba(40,40,40,0.55);border-radius:0 0 0 6px"></div>
</div>
<div class="a" style="left:873px;top:585px;width:9px;height:20px;background:#2a2a2a;border-radius:0 4px 4px 0;"></div>
<svg class="a" style="left:873.0px;top:592.0px" width="7" height="6" viewBox="0 0 7 6" ><path d="M0.8 1.2 L3.5 4 L6.2 1.2" fill="none" stroke="#d8d8d8" stroke-width="1.2"/></svg>
<div class="t" style="left:894px;top:588px;">View</div>
<div class="t" style="left:935px;top:588px;">Select</div>
<div class="t" style="left:982px;top:588px;">Add</div>
<div class="t" style="left:1019px;top:588px;">Object</div>
<div class="a" style="left:1078px;top:585px;width:77px;height:20px;background:#2a2a2a;border-radius:4px;"></div>
<svg class="a" style="left:1084.0px;top:587.0px" width="16" height="16" viewBox="0 0 16 16" ><path d="M2.5 2 V13.5 H14" fill="none" stroke="#e0e0e0" stroke-width="1.2"/><path d="M2.5 13.5 L11 5" stroke="#e0e0e0" stroke-width="1.2"/><path d="M0.5 4 L2.5 1 L4.5 4 M12 11.5 L15 13.5 L12 15.5 M8 5 H11.5 V8.5" fill="none" stroke="#e0e0e0" stroke-width="1.2"/><circle cx="2.5" cy="13.5" r="1.6" fill="#303030" stroke="#e0e0e0" stroke-width="1"/></svg>
<div class="t" style="left:1104px;top:588px;">Global</div>
<svg class="a" style="left:1141.0px;top:591.0px" width="10" height="8" viewBox="0 0 10 8" ><path d="M1.5 2 L5 5.5 L8.5 2" fill="none" stroke="#d8d8d8" stroke-width="1.3" stroke-linecap="round" stroke-linejoin="round"/></svg>
<div class="a" style="left:1161px;top:585px;width:31px;height:20px;background:#2a2a2a;border-radius:4px;"></div>
<svg class="a" style="left:1165.5px;top:587.5px" width="15" height="15" viewBox="0 0 15 15" ><path d="M6 3 A4.3 4.3 0 1 1 12 9" fill="none" stroke="#e0e0e0" stroke-width="1.2"/><path d="M9 12 A4.3 4.3 0 1 1 3 6" fill="none" stroke="#e0e0e0" stroke-width="1.2"/><circle cx="7.5" cy="7.5" r="1.5" fill="#e0e0e0"/></svg>
<svg class="a" style="left:1180.0px;top:591.0px" width="10" height="8" viewBox="0 0 10 8" ><path d="M1.5 2 L5 5.5 L8.5 2" fill="none" stroke="#d8d8d8" stroke-width="1.3" stroke-linecap="round" stroke-linejoin="round"/></svg>
<div class="a" style="left:1199px;top:585px;width:51px;height:20px;background:#2a2a2a;border-radius:4px;"></div>
<div class="a" style="left:1199px;top:585px;width:19px;height:20px;background:#4a4a4a;border-radius:4px 0 0 4px;"></div>
<svg class="a" style="left:1200.5px;top:587.5px" width="15" height="15" viewBox="0 0 15 15" ><g transform="rotate(225 7.5 7.5)"><path d="M3 2 V8.5 A4.5 4.5 0 0 0 12 8.5 V2 M6 2 V8.5 A1.5 1.5 0 0 0 9 8.5 V2 M3 2 H6 M9 2 H12" fill="none" stroke="#a8a8a8" stroke-width="1.1"/></g></svg>
<svg class="a" style="left:1220.0px;top:588.0px" width="14" height="14" viewBox="0 0 14 14" ><path d="M1 10h12M1.5 7.5v5M5 8v4M8.5 8v4M12.5 7.5v5" stroke="#e0e0e0" stroke-width="1.1"/><rect x="9" y="1" width="3.5" height="3.5" fill="#f0f0f0"/></svg>
<svg class="a" style="left:1236.0px;top:591.0px" width="10" height="8" viewBox="0 0 10 8" ><path d="M1.5 2 L5 5.5 L8.5 2" fill="none" stroke="#d8d8d8" stroke-width="1.3" stroke-linecap="round" stroke-linejoin="round"/></svg>
<div class="a" style="left:1255px;top:585px;width:51px;height:20px;background:#3d3d3d;border-radius:4px;"></div>
<div class="a" style="left:1255px;top:585px;width:20px;height:20px;background:#4a4a4a;border-radius:4px 0 0 4px;"></div>
<svg class="a" style="left:1258.0px;top:588.0px" width="14" height="14" viewBox="0 0 14 14" ><circle cx="7" cy="7" r="5.8" fill="none" stroke="#a0a0a0" stroke-width="1.1"/><circle cx="7" cy="7" r="1.8" fill="#e6e6e6"/></svg>
<svg class="a" style="left:1280.0px;top:588.0px" width="14" height="14" viewBox="0 0 14 14" ><path d="M1 13 C4 13 5 1 7 1 C9 1 10 13 13 13" fill="none" stroke="#6a6a6a" stroke-width="1.1"/></svg>
<svg class="a" style="left:1295.0px;top:591.0px" width="10" height="8" viewBox="0 0 10 8" ><path d="M1.5 2 L5 5.5 L8.5 2" fill="none" stroke="#5a5a5a" stroke-width="1.3" stroke-linecap="round" stroke-linejoin="round"/></svg>
<div class="a" style="left:1322px;top:585px;width:31px;height:20px;background:#2a2a2a;border-radius:4px;"></div>
<svg class="a" style="left:1325.0px;top:587.0px" width="16" height="16" viewBox="0 0 16 16" ><path d="M5 6 C7 2.5 13 2.5 15 6 C13 9.5 7 9.5 5 6Z" fill="none" stroke="#e6e6e6" stroke-width="1.2"/><circle cx="10" cy="6" r="1.8" fill="#e6e6e6"/><path d="M1 8 L8 11 L5 12 L4 15Z" fill="#e6e6e6"/></svg>
<svg class="a" style="left:1341.0px;top:591.0px" width="10" height="8" viewBox="0 0 10 8" ><path d="M1.5 2 L5 5.5 L8.5 2" fill="none" stroke="#d8d8d8" stroke-width="1.3" stroke-linecap="round" stroke-linejoin="round"/></svg>
<div class="a" style="left:1360px;top:585px;width:38px;height:20px;background:#2a2a2a;border-radius:4px;"></div>
<div class="a" style="left:1360px;top:585px;width:18px;height:20px;background:#4772b3;border-radius:4px 0 0 4px;"></div>
<svg class="a" style="left:1361.5px;top:587.0px" width="15" height="16" viewBox="0 0 15 16" ><path d="M2 14 C3 7 7 3 13 2" fill="none" stroke="#e6e6e6" stroke-width="1.2"/><circle cx="3" cy="13" r="1.7" fill="none" stroke="#e6e6e6" stroke-width="1.1"/><path d="M5 11 L12 4 M8.5 3.5 H12.5 V7.5" fill="none" stroke="#e6e6e6" stroke-width="1.2"/></svg>
<svg class="a" style="left:1384.0px;top:591.0px" width="10" height="8" viewBox="0 0 10 8" ><path d="M1.5 2 L5 5.5 L8.5 2" fill="none" stroke="#d8d8d8" stroke-width="1.3" stroke-linecap="round" stroke-linejoin="round"/></svg>
<div class="a" style="left:1405px;top:585px;width:38px;height:20px;background:#2a2a2a;border-radius:4px;"></div>
<div class="a" style="left:1405px;top:585px;width:18px;height:20px;background:#4772b3;border-radius:4px 0 0 4px;"></div>
<svg class="a" style="left:1406.0px;top:587.0px" width="16" height="16" viewBox="0 0 16 16" ><circle cx="9" cy="6.5" r="5" fill="#e6e6e6"/><circle cx="6.5" cy="9.5" r="5" fill="none" stroke="#e6e6e6" stroke-width="1.3"/><circle cx="9.5" cy="7" r="2" fill="#4772b3"/></svg>
<svg class="a" style="left:1429.0px;top:591.0px" width="10" height="8" viewBox="0 0 10 8" ><path d="M1.5 2 L5 5.5 L8.5 2" fill="none" stroke="#d8d8d8" stroke-width="1.3" stroke-linecap="round" stroke-linejoin="round"/></svg>
<div class="a" style="left:1450px;top:585px;width:19px;height:20px;background:#3a3a3a;border-radius:4px;"></div>
<svg class="a" style="left:1451.5px;top:587.5px" width="15" height="15" viewBox="0 0 15 15" ><rect x="1" y="4.5" width="9" height="9" fill="none" stroke="#606060" stroke-width="1.1"/><rect x="4.5" y="1" width="9" height="9" fill="none" stroke="#606060" stroke-width="1.1"/></svg>
<div class="a" style="left:1475px;top:585px;width:95px;height:20px;background:#2a2a2a;border-radius:4px;"></div>
<div class="a" style="left:1475px;top:585px;width:19px;height:20px;background:#3d3d3d;border-radius:4px 0 0 4px;"></div>
<div class="a" style="left:1494px;top:585px;width:19px;height:20px;background:#3d3d3d;border-radius:0px;"></div>
<div class="a" style="left:1513px;top:585px;width:18px;height:20px;background:#3d3d3d;border-radius:0px;"></div>
<div class="a" style="left:1531px;top:585px;width:19px;height:20px;background:#4772b3;border-radius:0px;"></div>
<svg class="a" style="left:1476.5px;top:587.5px" width="15" height="15" viewBox="0 0 15 15" ><circle cx="7.5" cy="7.5" r="6.3" fill="none" stroke="#dcdcdc" stroke-width="1.1"/><ellipse cx="7.5" cy="7.5" rx="3" ry="6.3" fill="none" stroke="#dcdcdc" stroke-width="1.1"/><path d="M1.5 5.5h12M1.5 9.5h12" stroke="#dcdcdc" stroke-width="1.1"/></svg>
<svg class="a" style="left:1495.5px;top:587.5px" width="15" height="15" viewBox="0 0 15 15" ><circle cx="7.5" cy="7.5" r="6.5" fill="#b4b4b4"/></svg>
<svg class="a" style="left:1514.5px;top:587.5px" width="15" height="15" viewBox="0 0 15 15" ><circle cx="7.5" cy="7.5" r="6.2" fill="none" stroke="#dcdcdc" stroke-width="1.2"/><path d="M7.5 1.3 V7.5 H13.7 A6.2 6.2 0 0 1 7.5 13.7 A6.2 6.2 0 0 1 1.3 7.5 A6.2 6.2 0 0 1 7.5 1.3Z" fill="#c8c8c8"/><path d="M7.5 1.3 V7.5 H13.7" fill="none" stroke="#333" stroke-width="0.6"/></svg>
<svg class="a" style="left:1533.5px;top:587.5px" width="15" height="15" viewBox="0 0 15 15" ><circle cx="7.5" cy="7.5" r="6.2" fill="none" stroke="#eeeeee" stroke-width="1.3"/><path d="M3.5 6 A4 4 0 0 1 6.5 3" fill="none" stroke="#eeeeee" stroke-width="1.3"/><path d="M9 12 L12 9" stroke="#eeeeee" stroke-width="0.8" stroke-dasharray="1 1"/></svg>
<svg class="a" style="left:1556.0px;top:591.0px" width="10" height="8" viewBox="0 0 10 8" ><path d="M1.5 2 L5 5.5 L8.5 2" fill="none" stroke="#d8d8d8" stroke-width="1.3" stroke-linecap="round" stroke-linejoin="round"/></svg>
<div class="a" style="left:882px;top:612px;width:96px;height:19px;background:#454545;border-radius:4px;"></div>
<div class="a" style="left:882px;top:612px;width:19px;height:19px;background:#4772b3;border-radius:4px 0 0 4px;"></div>
<svg class="a" style="left:884.5px;top:614.5px" width="14" height="14" viewBox="0 0 14 14" ><rect x="1.5" y="1.5" width="11" height="11" fill="none" stroke="#fff" stroke-width="1.2" stroke-dasharray="2 1.5"/></svg>
<svg class="a" style="left:903.5px;top:614.5px" width="14" height="14" viewBox="0 0 14 14" ><path d="M1 6 H5 V1 H13 V9 H9 V14 H1Z" fill="#c8c8c8"/></svg>
<svg class="a" style="left:922.5px;top:614.5px" width="14" height="14" viewBox="0 0 14 14" ><path d="M1 5.5H8.5V13H1Z" fill="none" stroke="#c8c8c8" stroke-width="1" stroke-dasharray="1.6 1.4"/><path d="M5 1H13V9H8.5V5.5H5Z" fill="#c8c8c8"/></svg>
<svg class="a" style="left:941.5px;top:614.5px" width="14" height="14" viewBox="0 0 14 14" ><path d="M5 1H13V9H9V5H5Z M1 5H5V9H9V13H1Z" fill="#c8c8c8"/></svg>
<svg class="a" style="left:960.5px;top:614.5px" width="14" height="14" viewBox="0 0 14 14" ><rect x="1.5" y="1.5" width="11" height="11" fill="none" stroke="#c8c8c8" stroke-width="1" stroke-dasharray="1.8 1.6"/><rect x="4.5" y="4.5" width="5" height="5" fill="#c8c8c8"/></svg>
<div class="a" style="left:901px;top:612px;width:1px;height:19px;background:#363636;border-radius:0px;"></div>
<div class="a" style="left:920px;top:612px;width:1px;height:19px;background:#363636;border-radius:0px;"></div>
<div class="a" style="left:939px;top:612px;width:1px;height:19px;background:#363636;border-radius:0px;"></div>
<div class="a" style="left:958px;top:612px;width:1px;height:19px;background:#363636;border-radius:0px;"></div>
<div class="a" style="left:1503px;top:612px;width:66px;height:19px;background:#2a2a2a;border-radius:4px;"></div>
<div class="t" style="left:1510px;top:614px;">Options</div>
<svg class="a" style="left:1556.0px;top:618.0px" width="10" height="8" viewBox="0 0 10 8" ><path d="M1.5 2 L5 5.5 L8.5 2" fill="none" stroke="#d8d8d8" stroke-width="1.3" stroke-linecap="round" stroke-linejoin="round"/></svg>
<div class="a" style="left:881px;top:643px;width:40px;height:70px;background:#2a2a2a;border-radius:5px;"></div>
<div class="a" style="left:881px;top:643px;width:40px;height:34px;background:#4772b3;border-radius:5px 5px 0 0;"></div>
<svg class="a" style="left:890.0px;top:649.0px" width="22" height="22" viewBox="0 0 22 22" ><path d="M1.5 5.5 V1.5 H5.5 M8.5 1.5 H13.5 M16.5 1.5 H20.5 V5.5 M20.5 8.5 V13.5 M20.5 16.5 V20.5 H16.5 M13.5 20.5 H8.5 M5.5 20.5 H1.5 V16.5 M1.5 13.5 V8.5" fill="none" stroke="#ffaf29" stroke-width="1.8"/><path d="M8 6.5 L8 16 L10.5 13.5 L16 12.5Z" fill="#e8e8e8"/></svg>
<svg class="a" style="left:915px;top:671px" width="4" height="4"><path d="M4 0 L4 4 L0 4Z" fill="#9fb4d6"/></svg>
<svg class="a" style="left:889.0px;top:683.0px" width="24" height="24" viewBox="0 0 24 24" ><circle cx="12" cy="12" r="10.5" fill="none" stroke="#f0f0f0" stroke-width="1.8"/><circle cx="12" cy="12" r="10.5" fill="none" stroke="#b03535" stroke-width="1.8" stroke-dasharray="3.3 4.95" stroke-dashoffset="1.6"/><path d="M12 5.5v4M12 14.5V18.5M5.5 12h4M14.5 12H18.5" stroke="#8c8c8c" stroke-width="1.6"/></svg>
<div class="a" style="left:881px;top:718px;width:40px;height:140px;background:#2a2a2a;border-radius:5px;"></div>
<div class="a" style="left:881px;top:752.5px;width:40px;height:1px;background:#3a3a3a;border-radius:0px;"></div>
<div class="a" style="left:881px;top:787.5px;width:40px;height:1px;background:#3a3a3a;border-radius:0px;"></div>
<div class="a" style="left:881px;top:822.5px;width:40px;height:1px;background:#3a3a3a;border-radius:0px;"></div>
<svg class="a" style="left:889.0px;top:723.0px" width="24" height="24" viewBox="0 0 24 24" ><path d="M12 1 L15.2 4.8 L8.8 4.8Z M12 23 L15.2 19.2 L8.8 19.2Z M1 12 L4.8 8.8 L4.8 15.2Z M23 12 L19.2 8.8 L19.2 15.2Z" fill="#e0e0e0"/><path d="M12 6v3M12 15v3M6 12h3M15 12h3" stroke="#e0e0e0" stroke-width="1.6"/></svg>
<svg class="a" style="left:889.0px;top:758.0px" width="24" height="24" viewBox="0 0 24 24" ><path d="M5 9 A7.5 7.5 0 0 1 18.5 8.5" fill="none" stroke="#e0e0e0" stroke-width="1.3"/><path d="M19 15 A7.5 7.5 0 0 1 5.5 15.5" fill="none" stroke="#e0e0e0" stroke-width="1.3"/><path d="M1.5 11.5 L8 11.5 L4.8 15.8Z M16 12.5 L22.5 12.5 L19.2 8.2Z" fill="#e0e0e0"/><path d="M12 8.8 L15.2 12 L12 15.2 L8.8 12Z" fill="#a0a0a0"/></svg>
<svg class="a" style="left:889.0px;top:793.0px" width="24" height="24" viewBox="0 0 24 24" ><path d="M6 8.5 V3 H20 V17 H14.5" fill="none" stroke="#c8c8c8" stroke-width="1.4"/><rect x="3" y="11" width="10" height="10" fill="#e6e6e6"/><path d="M11.5 12.5 L18 6 M14 6 H18 V10" fill="none" stroke="#e6e6e6" stroke-width="1.4"/></svg>
<svg class="a" style="left:915px;top:816px" width="4" height="4"><path d="M4 0 L4 4 L0 4Z" fill="#9a9a9a"/></svg>
<svg class="a" style="left:889.0px;top:828.0px" width="24" height="24" viewBox="0 0 24 24" ><circle cx="12" cy="12" r="8.8" fill="none" stroke="#e0e0e0" stroke-width="1.2" stroke-dasharray="5.5 1.4" stroke-dashoffset="2.5"/><rect x="7.5" y="7.5" width="9" height="9" fill="#e6e6e6"/><path d="M12 1.5 L14.2 4.5 L9.8 4.5Z M12 22.5 L14.2 19.5 L9.8 19.5Z M1.5 12 L4.5 9.8 L4.5 14.2Z M22.5 12 L19.5 9.8 L19.5 14.2Z" fill="#e0e0e0"/></svg>
<div class="a" style="left:881px;top:863px;width:40px;height:70px;background:#2a2a2a;border-radius:5px;"></div>
<div class="a" style="left:881px;top:897.5px;width:40px;height:1px;background:#3a3a3a;border-radius:0px;"></div>
<svg class="a" style="left:889.0px;top:868.0px" width="24" height="24" viewBox="0 0 24 24" ><path d="M17 1.5 L21 5.5 L9 17.5 L3.5 19 L5 13.5Z" fill="#e6e6e6"/><path d="M15 3.5 L19 7.5" stroke="#2a2a2a" stroke-width="0.9"/><path d="M5.5 20 C9 23 12 18.5 14.5 17 C17.5 15.5 19 17.5 21 20" fill="none" stroke="#74cf9c" stroke-width="1.4"/></svg>
<svg class="a" style="left:915px;top:891px" width="4" height="4"><path d="M4 0 L4 4 L0 4Z" fill="#9a9a9a"/></svg>
<svg class="a" style="left:889.0px;top:903.0px" width="24" height="24" viewBox="0 0 24 24" ><path d="M6 9 A10 10 0 0 1 16 19 L6 19Z" fill="#74cf9c"/><path d="M6.5 6.5 A12.5 12.5 0 0 1 19 19" fill="none" stroke="#74cf9c" stroke-width="1.1"/><rect x="2.5" y="1" width="3.8" height="21" fill="#e6e6e6"/><rect x="2.5" y="18.5" width="20" height="3.5" fill="#e6e6e6"/><path d="M4.5 4h2M4.5 7h2M4.5 10h2M4.5 13h2M4.5 16h2M9 20.5v-2M12 20.5v-2M15 20.5v-2M18 20.5v-2M21 20.5v-2" stroke="#333" stroke-width="0.8"/></svg>
<div class="a" style="left:881px;top:938px;width:40px;height:35px;background:#2a2a2a;border-radius:5px;"></div>
<svg class="a" style="left:889.0px;top:943.0px" width="24" height="24" viewBox="0 0 24 24" ><path d="M5 1v8M1 5h8" stroke="#74cf9c" stroke-width="2.2"/><path d="M8 10.5 L11.5 7 H21.5 V17 L18 20.5 H8Z M8 10.5 H18 V20.5 M18 10.5 L21.5 7" fill="none" stroke="#74cf9c" stroke-width="1.2"/></svg>
<svg class="a" style="left:915px;top:966px" width="4" height="4"><path d="M4 0 L4 4 L0 4Z" fill="#9a9a9a"/></svg>
<svg class="a" style="left:0;top:0" width="1578" height="968"><line x1="1526.5" y1="683.6" x2="1526.8" y2="652.8" stroke="#3c8ce0" stroke-width="2"/><line x1="1526.5" y1="683.6" x2="1558.8" y2="684.8" stroke="#e04a5a" stroke-width="2"/><circle cx="1494.8" cy="684.8" r="7.5" fill="#7a3a46" stroke="#e0405a" stroke-width="1.2"/><circle cx="1526.8" cy="716.6" r="7.5" fill="#41628e" stroke="#3d84d8" stroke-width="1.2"/><circle cx="1527.5" cy="686" r="8" fill="#6a9a2a"/><circle cx="1526.5" cy="683.6" r="8" fill="#4d6730" stroke="#8ad62a" stroke-width="1.4"/><circle cx="1526.8" cy="652.8" r="8" fill="#2f80da"/><text x="1526.8" y="657" text-anchor="middle" font-size="11" font-family="Liberation Sans" fill="#101828">Z</text><circle cx="1558.8" cy="684.8" r="8" fill="#d3364e"/><text x="1558.8" y="689" text-anchor="middle" font-size="11" font-family="Liberation Sans" fill="#201010">X</text><circle cx="1555" cy="739.4" r="13.5" fill="#282828" fill-opacity="0.36"/><g transform="translate(1555,739.4)"><circle cx="2" cy="-2" r="5" fill="none" stroke="#e8e8e8" stroke-width="1.3"/><path d="M2 -5v6M-1 -2h6" stroke="#e8e8e8" stroke-width="1.1"/><path d="M-1.5 1.5 L-6 6" stroke="#e8e8e8" stroke-width="2.2" stroke-linecap="round"/></g><circle cx="1555" cy="769.9" r="13.5" fill="#282828" fill-opacity="0.36"/><g transform="translate(1555,769.9)"><path d="M-5 -1 L-5 -5 M-2.5 -1 L-2.5 -7 M0 -1 L0 -7.5 M2.5 -1 L2.5 -6 M-5.5 0 C-6.5 5 -3 7 0 7 C4 7 5 4 5 1 L6 -3" fill="none" stroke="#eeeeee" stroke-width="2.2" stroke-linecap="round"/><path d="M-5 0 C-5 5 -3 6.5 0 6.5 C3.5 6.5 4.5 4 4.5 1 L4.5 -2 L-5 -2Z" fill="#eeeeee"/></g><circle cx="1555" cy="800" r="13.5" fill="#282828" fill-opacity="0.36"/><g transform="translate(1555,800)"><circle cx="-3" cy="-3" r="3" fill="#e8e8e8"/><circle cx="3" cy="-3" r="3" fill="#e8e8e8"/><rect x="-4" y="1" width="7" height="5" fill="#e8e8e8"/><path d="M4 3.5 L7 1.5 V5.5Z" fill="#e8e8e8"/></g><circle cx="1555" cy="830.6" r="13.5" fill="#282828" fill-opacity="0.36"/><g transform="translate(1555,830.6)"><rect x="-4.5" y="-1" width="9" height="7" fill="none" stroke="#e8e8e8" stroke-width="1.2"/><path d="M-2.5 -1 V-4 A2.5 2.5 0 0 1 2.5 -4 V-3" fill="none" stroke="#e8e8e8" stroke-width="1.2"/><path d="M0 1.5v2" stroke="#e8e8e8" stroke-width="1.2"/></g></svg>
<div class="a" style="left:1568px;top:657px;width:12px;height:17px;background:rgba(60,60,60,0.35);border-radius:4px;"></div>
<svg class="a" style="left:1570.0px;top:660.5px" width="6" height="10" viewBox="0 0 6 10" ><path d="M4.5 1 L1.5 5 L4.5 9" fill="none" stroke="#bbb" stroke-width="1.1"/></svg>
<div class="t ov" style="left:938px;top:644px;font-size:11.6px">Camera Perspective</div>
<div class="t ov" style="left:938px;top:662px;font-size:11.6px;letter-spacing:0.22px">(156) iphone | applewatch parent</div>
</body></html>
